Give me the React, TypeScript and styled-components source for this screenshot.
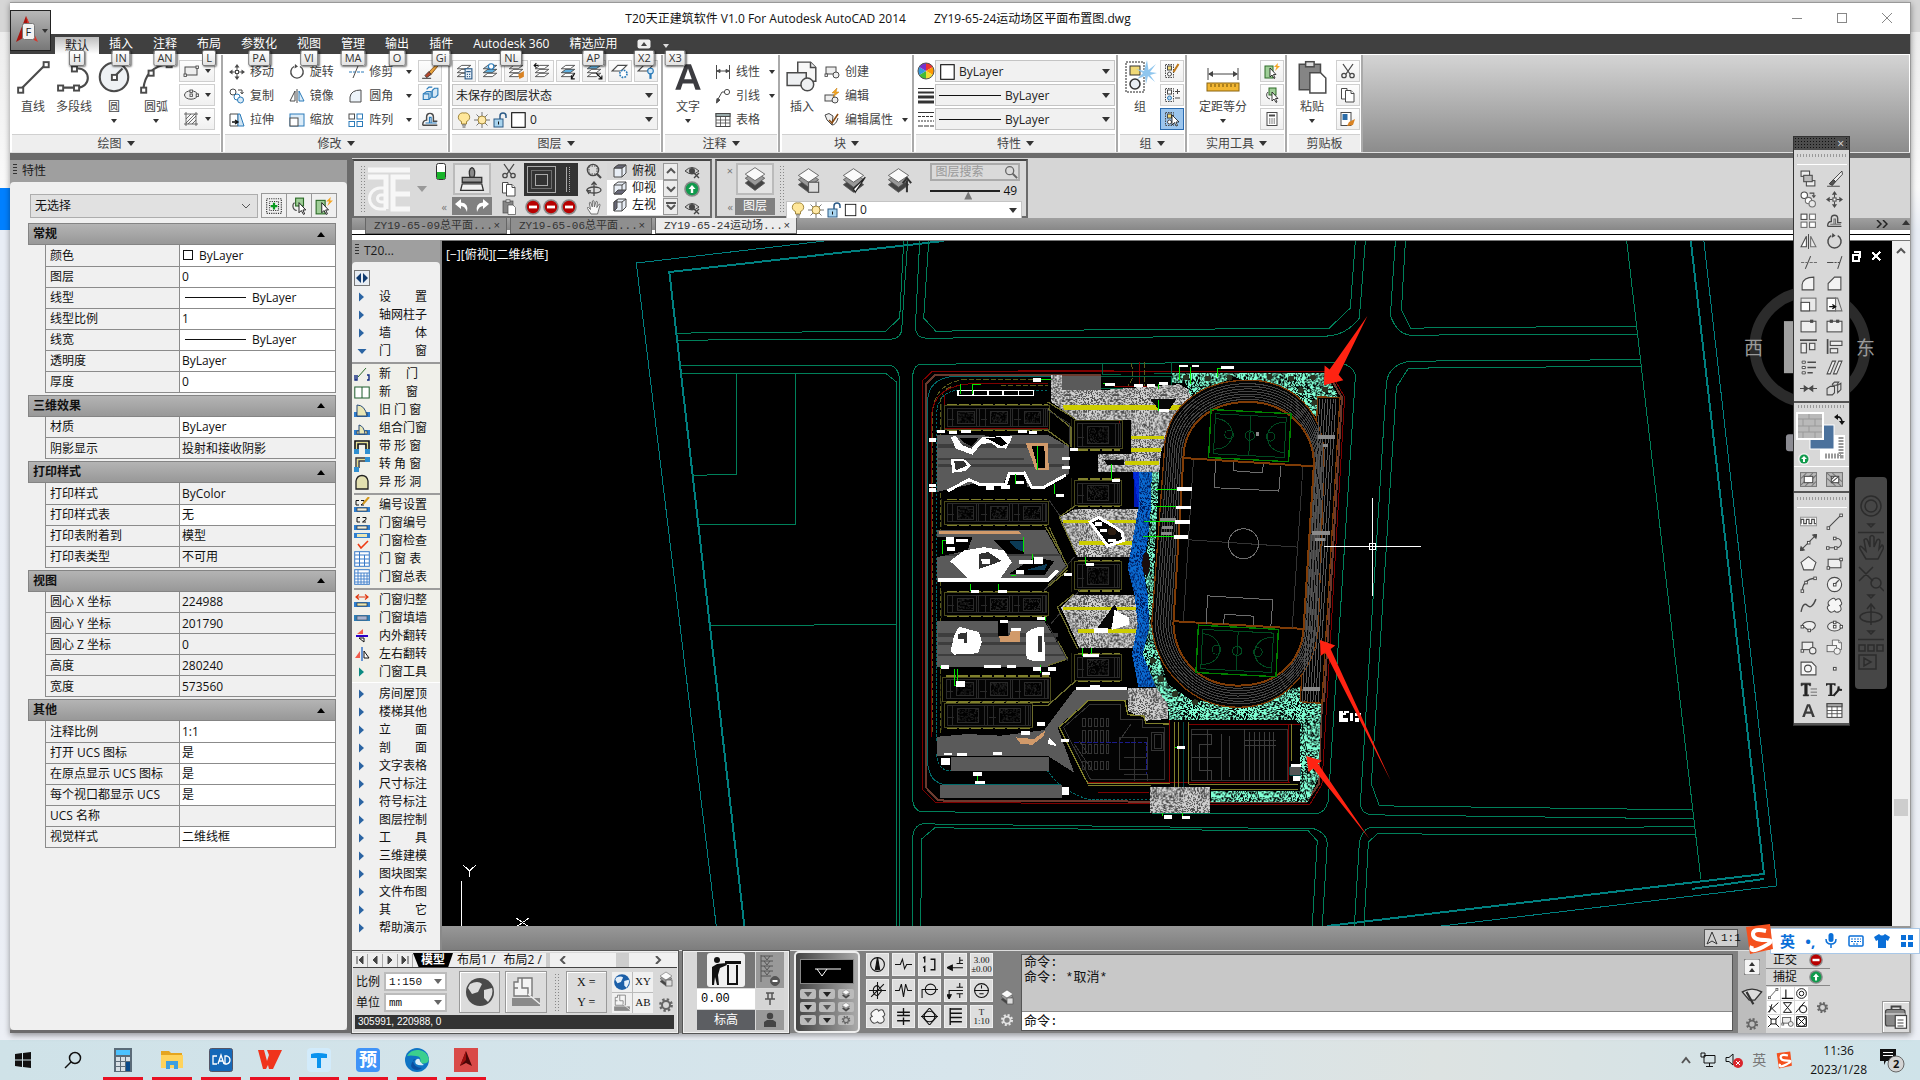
import React from "react";
import styled, { createGlobalStyle, css } from "styled-components";

const UI = `"Open Sans", "Noto Sans CJK SC", sans-serif`;
const MONO = `"Liberation Mono", "Noto Sans CJK SC", monospace`;

const Global = createGlobalStyle`
  * { box-sizing: border-box; }
  body { margin: 0; background: #e9edf3; font-family: ${UI}; font-size: 12px; line-height: 16px; color: #111; overflow: hidden; }
  button, input, select { font: inherit; color: inherit; margin: 0; padding: 0; border: 0; background: none; border-radius: 0; }
  svg { display: block; flex: none; }
`;

/* ---------- icons (16 x 16 grid) ---------- */
const K = "#4a4a4a";
const B = "#2b7bb9";
const sq = (x: number, y: number) => <rect key={`${x}-${y}`} x={x - 1} y={y - 1} width="2.4" height="2.4" fill="#fff" stroke={K} strokeWidth="0.9" />;
const layers = (a: string, b: string, c: string) => (
  <g stroke={K} strokeWidth="0.8">
    <path d="M2 13 6 10H14L10 13Z" fill={c} /><path d="M2 9.500 6 6.500H14L10 9.500Z" fill={b} /><path d="M2 6 6 3H14L10 6Z" fill={a} />
  </g>
);
const stack = (
  <g stroke="#555" strokeWidth="0.5"><path d="M8 6 14 10.500 8 15 2 10.500Z" fill="#444" /><path d="M8 3.500 14 7.500 8 12 2 7.500Z" fill="#999" /><path d="M8 1 14 5 8 9 2 5Z" fill="#fafafa" /></g>
);
const cube = (f: string, side: number) => (
  <g stroke={K} fill="#fff">
    <path d="M2 5 6 2H14V10L10 14H2Z" fill="#e8eef6" /><path d="M2 5H10V14M10 5 14 2" fill="none" />
    {side === 0 ? <path d="M2 5 6 2H14L10 5Z" fill={f} /> : side === 1 ? <path d="M2 14 6 10H14L10 14Z" fill={f} /> : <path d="M2 5 5 3V11L2 14Z" fill={f} />}
  </g>
);
const gear = (c: string) => (
  <g><circle cx="8" cy="8" r="5.6" fill="none" stroke={c} strokeWidth="2.6" strokeDasharray="2.3 2.1" /><circle cx="8" cy="8" r="4" fill="none" stroke={c} strokeWidth="2" /></g>
);
const dot = (up: boolean) => (
  <g><circle cx="8" cy="8" r="7.8" fill="#8a8a8a" /><circle cx="8" cy="8" r="6.2" fill={up ? "#109a4c" : "#b80000"} />
    {up ? <path d="M8 4 11.5 8H9.2V12H6.8V8H4.5Z" fill="#fff" /> : <rect x="4" y="6.6" width="8" height="2.8" fill="#fff" />}</g>
);
const wall = (mid: string) => <g><rect x="0" y="10" width="16" height="5" fill="#2f7fd0" /><rect x="3" y="11" width="10" height="3" fill={mid} stroke="#333" strokeWidth="0.7" /></g>;

const P: Record<string, React.ReactNode> = {
  line: <g stroke={K}><path d="M2 14 14 2" />{sq(2, 14)}{sq(14, 2)}</g>,
  pline: <g stroke={K} fill="none"><path d="M1 13H10A4.5 4.5 0 0 0 10 4H8" />{sq(1.5, 13)}{sq(9, 13)}{sq(8, 4)}</g>,
  circle: <g stroke={K} fill="#eef1f4"><circle cx="8" cy="8" r="6.7" /><path d="M8 8 12 4" />{sq(8, 8)}</g>,
  arc: <g stroke={K} fill="none"><path d="M2 14Q3 3 14 2" />{sq(2, 14)}{sq(5.5, 6)}{sq(14, 2)}</g>,
  rect: <g stroke={K} fill="#eee"><rect x="2" y="4" width="12" height="8" />{sq(2, 12)}{sq(14, 4)}</g>,
  ellipse: <g stroke={K} fill="#eee"><ellipse cx="8" cy="8" rx="6.5" ry="4.2" />{sq(8, 8)}{sq(14.2, 8)}{sq(8, 4)}</g>,
  ellarc: <g stroke={K} fill="#eee"><path d="M2 7C4 2 14 2 14.5 7 14 11 10 12 8 11.5Z" />{sq(2, 8)}{sq(8.5, 11.5)}</g>,
  hatch: <g stroke={K} strokeWidth="0.8" fill="none"><path d="M3 1V15M13 1V15M1 3H15M1 13H15M3 8 8 3M3 12 12 3M5 13 13 5M9 13 13 9" /></g>,
  move: <g fill={K}><path d="M8 0 10.5 3.5H5.5ZM8 16 5.5 12.5H10.5ZM0 8 3.5 5.5V10.5ZM16 8 12.5 10.5V5.5Z" /><rect x="6.5" y="6.5" width="3" height="3" fill="#fff" stroke={K} /><path d="M7.5 3h1v3h-1zM7.5 10h1v3h-1zM3 7.5h3v1H3zM10 7.5h3v1h-3z" /></g>,
  rotate: <g fill="none" stroke={K} strokeWidth="1.4"><path d="M5 2.5A6.2 6.2 0 1 0 11 2.5" /><path d="M6 0 9 2.5 5.5 4.5Z" fill={K} stroke="none" /></g>,
  trim: <g stroke={B} fill="none"><path d="M1 8H7M9 8H16" strokeDasharray="3 1" /><path d="M5 14 10 2" stroke={K} /></g>,
  extend: <g stroke={K} fill="none"><path d="M1 8H7" /><path d="M8 8H13" strokeDasharray="2 1" /><path d="M11 14 15 2" /></g>,
  copy: <g stroke={K} fill="#fff"><circle cx="4" cy="4" r="3" /><circle cx="8" cy="9" r="3" stroke={B} /><circle cx="11.5" cy="12" r="3" stroke={B} fill="#dcecf8" /><path d="M9 2H13V5M11.5 4 13 6 14.5 4" fill="none" /></g>,
  mirror: <g><path d="M6 3V13H1Z" fill="#fff" stroke={K} /><path d="M10 3V13H15Z" fill="#dcecf8" stroke={B} /><path d="M8 1V15" stroke={K} /></g>,
  fillet: <path d="M2 14V9Q3 2 13 2V14Z" fill="#edf4fa" stroke={K} />,
  chamfer: <path d="M2 14V8L8 2H14V14Z" fill="#f2f2f2" stroke={K} />,
  stretch: <g><path d="M1 2H9V14H1Z" fill="#fff" stroke={K} /><path d="M9 2H11L15 14H9Z" fill="#cfe3f2" stroke={B} /><path d="M3 10H8M6 8 9 10 6 12" stroke="#111" fill="none" strokeWidth="1.3" /></g>,
  scale: <g fill="#fff"><rect x="1" y="2" width="14" height="12" fill="#dcecf8" stroke={B} /><rect x="1" y="6" width="8" height="8" stroke={K} /></g>,
  array: <g fill="#fff" stroke={B}><rect x="1" y="2" width="5.5" height="5" stroke={K} /><rect x="9" y="2" width="5.5" height="5" /><rect x="1" y="9.5" width="5.5" height="5" /><rect x="9" y="9.5" width="5.5" height="5" /></g>,
  erase: <g><path d="M14.5 1 7 9 9 11 15.5 3Z" fill="#e8a33d" stroke="#7a4510" strokeWidth="0.7" /><path d="M7 8.5 3.5 12 5 14 9 11Z" fill="#b5462b" stroke="#333" strokeWidth="0.7" /><path d="M1 14.5H9" stroke={K} /></g>,
  explode: <g fill="#d5e8f6" stroke={B}><path d="M2 7 5 5H9V10L7 12H2Z" /><path d="M10 4 12 2H15V8L13 10H10Z" /><path d="M2 7H7V12" /><path d="M5 3 7 1H10" /></g>,
  offset: <g fill="none" stroke={K}><path d="M1.5 13.5H14.5M14.5 10H11V6A3 3 0 0 0 5 6V9Q1.5 9 1.5 13.5" strokeWidth="1.3" /><path d="M4 11.5H14M7.5 11V6.5H9V11" stroke={B} /></g>,
  lay0: <g>{layers("#fff", "#fff", "#fff")}<rect x="9" y="6" width="6" height="9" fill="#eaf3fb" stroke="#2b5a86" /><path d="M10 8.5H14M10.5 11H11.5M12.5 11H13.5M10.5 13H11.5M12.5 13H13.5" stroke="#2b5a86" /></g>,
  lay1: <g>{layers("#9fd0f0", "#5fb0e0", "#fff")}<circle cx="9" cy="4" r="2.4" fill="#fff" stroke={B} /></g>,
  lay2: <g>{layers("#fff", "#fff", "#fff")}<path d="M15 8 10 11 11 15 15 13Z" fill="#d98324" /></g>,
  lay3: <g>{layers("#fff", "#fff", "#fff")}<path d="M1 3H5M3 1 1 3 3 5" stroke="#111" fill="none" /></g>,
  lay4: <g>{layers("#fff", "#5fb0e0", "#fff")}<path d="M14 10 11 15M11 12V15H14" stroke="#111" fill="none" /></g>,
  lay5: <g>{layers("#5fb0e0", "#fff", "#fff")}<path d="M10 10 15 15M12 15H15V12" stroke="#111" fill="none" /></g>,
  lay6: <g><path d="M1 8 6 3H14L9 8Z" fill="#fff" stroke={K} /><circle cx="11" cy="10.500" r="3.200" fill="#fff" stroke={B} strokeWidth="1.500" strokeDasharray="1.500 1" /></g>,
  lay7: <g><path d="M1 8 6 3H14L9 8Z" fill="#fff" stroke={K} /><circle cx="12" cy="8" r="2.500" fill="#d5e8f6" stroke={B} /><rect x="11" y="10.500" width="2" height="4.500" fill={B} /></g>,
  bulb: <g><path d="M8 1A4.4 4.4 0 0 0 5.5 9.5V12H10.5V9.5A4.4 4.4 0 0 0 8 1Z" fill="#ffe79a" stroke="#8a6d1c" strokeWidth="0.8" /><path d="M6 13H10M6.5 15H9.5" stroke="#555" /></g>,
  sun: <g><path d="M8 0V16M0 8H16M2.5 2.5 13.5 13.5M13.5 2.5 2.5 13.5" stroke="#555" strokeWidth="0.8" /><circle cx="8" cy="8" r="4" fill="#ffe9a8" stroke="#8a6d1c" strokeWidth="0.8" /></g>,
  lock: <g><path d="M8 7V4A3 3 0 0 1 14 4V6" fill="none" stroke="#2b5a86" strokeWidth="1.5" /><rect x="2" y="7" width="9" height="8" fill="#a9d4ee" stroke="#2b5a86" /><path d="M6.5 9.5V12.5" stroke="#111" /></g>,
  swatch: <rect x="1.5" y="1.5" width="12" height="13" fill="#fff" stroke="#111" />,
  dim: <g stroke={K}><path d="M1.5 1V15M14.5 1V15M2 7H14" /><path d="M2 7 5 5.5V8.5ZM14 7 11 5.5V8.5Z" fill={K} /></g>,
  leader: <g stroke={K} fill="none"><circle cx="12" cy="4" r="2.6" /><path d="M9.5 4H7L2 13" /><path d="M1.5 15 2 10.5 5 12Z" fill={K} /></g>,
  table: <g stroke={K} fill="#fff"><rect x="1" y="1.5" width="14" height="13" /><rect x="1" y="1.5" width="14" height="3" fill="#9aa" /><path d="M1 8H15M1 11H15M5.5 4V14.5M10.5 4V14.5" strokeWidth="0.8" /></g>,
  block: <g stroke={K} strokeWidth="0.7" fill="#eef0f2"><path d="M6 1H12L14.500 3.500V10H6Z" fill="#f7f7f7" /><path d="M12 1V3.500H14.500" /><rect x="1" y="6" width="9" height="6" /><circle cx="10.500" cy="11.500" r="3" /></g>,
  blockNew: <g stroke={K} fill="#eee"><rect x="2" y="3" width="10" height="7" /><circle cx="12" cy="11" r="3" />{sq(2, 11)}</g>,
  blockEdit: <g stroke={K} fill="#eee"><rect x="1" y="7" width="9" height="6" /><circle cx="11" cy="12" r="3" /><path d="M13 0 8 5H11L9 9 15 4H12Z" fill="#f5a623" stroke="#c17a0b" strokeWidth="0.5" /></g>,
  attr: <g stroke={K} fill="#eee"><path d="M1 3 5 1.500 9 4 8 13 3 8Z" /><path d="M5 8 8 11 14 2" strokeWidth="1.6" fill="none" stroke="#8a4b12" /><path d="M8 13Q12 13 14 6" fill="none" /></g>,
  grpEdit: <g><rect x="1.5" y="1.5" width="8" height="13" fill="none" stroke={K} strokeDasharray="1.5 1" /><rect x="3.500" y="3" width="4" height="4" fill="#f3dc7a" stroke={K} /><circle cx="5.500" cy="11" r="2" fill="#fff" stroke={K} /><path d="M14.500 1 9.500 9" stroke="#c07a1a" strokeWidth="2" /></g>,
  grpPm: <g><rect x="1.5" y="1.5" width="8" height="13" fill="none" stroke={K} strokeDasharray="1.5 1" /><rect x="3.500" y="3" width="4" height="4" fill="#fff" stroke={K} /><circle cx="5.500" cy="11" r="2" fill="#bcd8ef" stroke={B} /><path d="M11 4.500H16M13.500 2V7M11 11H16" stroke={K} /></g>,
  grpSel: <g><rect x="1.5" y="1.5" width="8" height="13" fill="none" stroke={K} strokeDasharray="1.5 1" /><rect x="3.500" y="3" width="4" height="4" fill="#f3dc7a" stroke={K} /><circle cx="5.500" cy="11" r="2" fill="#fff" stroke={K} /><path d="M8 4V14L10.500 11.500 12 15 13.500 14.500 12 11H15Z" fill="#fff" stroke="#111" strokeWidth="0.8" /></g>,
  scissors: <g fill="none" stroke={K} strokeWidth="1.3"><path d="M3 1 10 11M13 1 6 11" /><circle cx="4" cy="12.5" r="2.2" /><circle cx="12" cy="12.5" r="2.2" /></g>,
  copydoc: <g fill="#fff" stroke={K}><path d="M1.5 1.5H7V12H1.5Z" /><path d="M5.5 3.5H11L14 6.5V15H5.5Z" /><path d="M11 3.5V6.5H14" /></g>,
  paste: <g stroke={K} strokeWidth="0.7"><rect x="2" y="2" width="10" height="12" fill="#858585" /><rect x="5" y="0.8" width="4" height="2.4" fill="#ddd" /><path d="M7 6H12L14.5 8.5V15.5H7Z" fill="#fff" /></g>,
  matchp: <g><rect x="1" y="1.5" width="10" height="13" fill="#fff" stroke={K} /><rect x="2.5" y="3" width="5" height="6" fill="#2b6ca8" /><path d="M15 8 9 11 7 15 13 14Z" fill="#d98324" /></g>,
  calc: <g><rect x="3" y="1.5" width="10" height="13" fill="#fff" stroke={K} /><rect x="5" y="3.5" width="6" height="2" fill={K} /><path d="M5 8H11M5 10H11M5 12H11" stroke={K} strokeDasharray="1.4 0.9" /></g>,
  globe: <g><circle cx="8" cy="8" r="7" fill="#4a4a4a" /><path d="M3 4Q7 2 9 4L7 8 4 9 2 6ZM10 7 14 6Q15 9 12 13L10 11Z" fill="#dcdcdc" /></g>,
  globeBlue: <g><circle cx="8" cy="8" r="7" fill="#1c5fa8" /><path d="M3 4Q7 2 9 4L7 8 4 9 2 6ZM10 7 14 6Q15 9 12 13L10 11Z" fill="#e6f0fa" /></g>,
  plan: <g stroke="#777" strokeWidth="0.7" fill="#f4f4f4"><path d="M1 11H15V15H1Z" fill="#8a8a8a" stroke="none" /><path d="M2 3H4V1H11V10H2Z" /><path d="M6 1V6H9V10M2 6H4" fill="none" /><path d="M9 9 15 14" stroke="#eee" /></g>,
  gear: gear("#666"), gearLight: gear("#e4e4e4"),
  stack, stackBox: <g>{stack}<rect x="8" y="9" width="6" height="6" fill="#ddd" stroke="#555" strokeWidth="0.7" /></g>,
  stackPen: <g>{stack}<path d="M15 6 9 15 8 13Z" fill="#fff" stroke="#222" strokeWidth="0.7" /></g>,
  stackUp: <g>{stack}<path d="M13 15V8M10.5 9.5 13 6.5 15.5 9.5" stroke="#333" fill="none" strokeWidth="1.2" /></g>,
  red: dot(false), green: dot(true),
  zoomwin: <g fill="none" stroke={K}><rect x="3" y="3" width="8" height="8" strokeDasharray="1.5 1" /><circle cx="7" cy="7" r="5.6" strokeWidth="1.4" /><path d="M11 11 15 15" strokeWidth="2.2" /></g>,
  orbit: <g fill="none" stroke={K} strokeWidth="1.3"><ellipse cx="8" cy="9" rx="7" ry="3" /><path d="M8 15V2M5.5 4 8 1 10.5 4M3 13 1 9.5 5 10" /></g>,
  hand: <path d="M5 15 1.5 9.5Q1 8 2.5 8.5L4.5 10.5 3.3 4Q3.5 2.8 4.7 3.6L6.3 8 6.4 2Q7.2.8 8 2L8.4 8 10 2.6Q11 1.8 11.4 3L10.8 8.5 13 5.2Q14.2 4.8 14 6.2L11.5 15Z" fill="#f8f8f8" stroke="#666" strokeWidth="0.9" />,
  cubeTop: cube("#667", 0), cubeBot: cube("#667", 1), cubeLeft: cube("#667", 2),
  eye: <g><path d="M1 8Q8 1 15 8 8 14 1 8Z" fill="#ccc" stroke="#444" /><circle cx="8" cy="8" r="3" fill="#444" /><path d="M10 10 15 15M15 10 10 15" stroke="#444" strokeWidth="1.4" /></g>,
  undo: <path d="M1 6 7 1V4.5Q15 5 13 14 11 8 7 8V11Z" fill="#fff" />,
  redo: <path d="M15 6 9 1V4.5Q1 5 3 14 5 8 9 8V11Z" fill="#fff" />,
  bigbrush: <g stroke="#333" strokeWidth="0.8"><path d="M6.8 7Q5.5 2 8 1 10.5 2 9.2 7Z" fill="#8a8a8a" /><path d="M2 7H14V10H2Z" fill="#9a9a9a" /><path d="M2 11H14L15 15H1Z" fill="#f1f1f1" /></g>,
  search: <g fill="none" stroke="#666"><circle cx="6.5" cy="6.5" r="4.6" strokeWidth="1.5" /><path d="M10 10 15 15" strokeWidth="2.2" /></g>,
  selplus: <g><rect x="1.5" y="1.5" width="13" height="13" fill="none" stroke="#333" strokeDasharray="1 1" /><rect x="4" y="4" width="8" height="8" fill="none" stroke="#333" strokeDasharray="1 1" /><path d="M8 5V11M5 8H11" stroke="#089b1f" strokeWidth="2" /></g>,
  selpick: <g><rect x="5" y="1" width="7" height="7" fill="#9fce97" stroke="#2c6b27" /><path d="M4 5A4 4 0 0 0 6 12" fill="none" stroke={K} /><path d="M8 5V14L10 12 12 15.5 13 15 11.5 11.5H14Z" fill="#fff" stroke="#111" strokeWidth="0.8" /></g>,
  selquick: <g><rect x="1" y="3" width="8" height="12" fill="#9fce97" stroke="#2c6b27" /><path d="M6 5V14L8 12 10 15.5 11 15 9.5 11.5H12Z" fill="#fff" stroke="#111" strokeWidth="0.8" /><path d="M14 0 10 4H12.5L11 8 16 3H13.5Z" fill="#f5a623" /></g>,
  door: <g><path d="M1 9V14H3V9M13 9H15V14H13" fill="none" stroke="#112a80" strokeWidth="1.4" /><path d="M4 11 12 2" stroke="#2a6b2a" /></g>,
  win: <g fill="#fff" stroke="#1d5c2c"><rect x="0.8" y="3" width="14.4" height="11" /><path d="M8 3V14" /></g>,
  olddoor: <g>{wall("#e9e6b4")}<path d="M3 14V3Q11 3 13 14Z" fill="#e9e6b4" stroke="#2a4d7c" /></g>,
  combo: <g>{wall("#e9e6b4")}<path d="M5 14V5Q10 6 11 14Z" fill="#e9e6b4" stroke="#2a4d7c" /></g>,
  band: <g fill="none"><path d="M1 12V3H15V12M4 12V6H12V12" stroke="#111" strokeWidth="1.6" /><path d="M2.5 12V4.5H13.5V12" stroke="#e3dc8a" /><rect x="0" y="11" width="5" height="5" fill="#2f8fd0" /><rect x="11" y="11" width="5" height="5" fill="#2f8fd0" /></g>,
  corner: <g fill="none"><path d="M2 14V2H12M5 12V5H12" stroke="#333" strokeWidth="1.4" /><path d="M3.5 13V3.5H12" stroke="#e3dc8a" /><rect x="0" y="11" width="5" height="5" fill="#2f8fd0" /><rect x="11" y="1" width="5" height="5" fill="#2f8fd0" /></g>,
  hole: <path d="M2 15V7Q3 1.5 8 1.5T14 7V15Z" fill="#e3e0b0" stroke="#222" strokeWidth="1.3" />,
  num: <g>{wall("#eed")}<path d="M6 2.5H3V7H6M8.5 2.5H12V4.5L8.5 7H12" stroke="#111" fill="none" /></g>,
  numEdit: <g>{wall("#eed")}<path d="M5 3.5H2V8H5M7 3.5H10V5.5L7 8H10" stroke="#111" fill="none" /><path d="M15 0 9 7" stroke="#d59a1c" strokeWidth="2" /></g>,
  check: <g><rect x="0" y="0" width="16" height="5" fill="#2f7fd0" /><rect x="3" y="1" width="10" height="3" fill="#e9e6b4" /><path d="M4 11 7 15 14 8" stroke="#ef3b12" fill="none" strokeWidth="1.6" /></g>,
  tbl: <g fill="#fff" stroke="#3a7bc8"><rect x="0.7" y="0.7" width="14.6" height="14.6" /><path d="M1 4H15M1 8H15M1 12H15M5.5 1V15M10.5 4V15" /></g>,
  tbl2: <g fill="#fff" stroke="#3a7bc8"><rect x="0.7" y="0.7" width="14.6" height="14.6" /><path d="M1 4H15M1 7H15M1 10H15M1 13H15M4 1V15M7 4V15M10 4V15M13 4V15" strokeWidth="0.9" /></g>,
  adj: <g>{wall("#e9e6b4")}<path d="M2 5H14M5 2.5 2 5 5 7.5M11 2.5 14 5 11 7.5" stroke="#e0370f" fill="none" strokeWidth="1.2" /></g>,
  fillw: <g><rect x="0" y="5" width="16" height="6" fill="#2f7fb8" /><rect x="3" y="6" width="10" height="4" fill="#a7b3cf" stroke="#456" strokeWidth="0.7" /></g>,
  flipV: <g><path d="M3 6H9V1Z" fill="#f35b4a" /><path d="M2 8H14" stroke="#2a00c8" strokeWidth="2" /><path d="M5 10H10V14Z" fill="#fff" stroke="#111" /></g>,
  flipH: <g><path d="M1 12H6V5Z" fill="#f35b4a" /><path d="M8 1V15" stroke="#2a6bc8" strokeWidth="1.4" /><path d="M10 5V12H15Z" fill="#fff" stroke="#111" /></g>,
  tri: <path d="M5 3.5 10 8 5 12.5Z" fill="#2b64a3" />,
  triG: <path d="M5 3.5 10 8 5 12.5Z" fill="#0b8a82" />,
  triD: <path d="M3.5 6H12.5L8 11Z" fill="#2b64a3" />,
  expand: <g><rect x="0.5" y="0.5" width="15" height="15" fill="#e8edf3" stroke="#777" /><path d="M7 3V13L2 8ZM9 3V13L14 8Z" fill="#0f3a70" /></g>,
  copies: <g fill="#eee" stroke={K}><rect x="1" y="1" width="8" height="5" /><rect x="6" y="10" width="8" height="5" /><rect x="3.5" y="5" width="8" height="6" fill="#bbb" /></g>,
  eraseG: <g stroke="#333" strokeWidth="0.8"><path d="M15 1 7 9 9 11 15.5 4Z" fill="#eee" /><path d="M7 9 3 13 6 14.5 9 11Z" fill="#555" /><path d="M1 15.3H13" /></g>,
  brk: <g fill="#eee" stroke={K}><rect x="1" y="4" width="14" height="10" /><rect x="10" y="3" width="2" height="2" fill={K} /></g>,
  brk2: <g fill="#eee" stroke={K}><rect x="1" y="4" width="14" height="10" /><rect x="4" y="3" width="2" height="2" fill={K} /><rect x="10" y="3" width="2" height="2" fill={K} /></g>,
  alignT: <g fill="#eee" stroke={K}><path d="M0 2H16" strokeWidth="1.6" /><rect x="1" y="5" width="5" height="9" /><rect x="9" y="5" width="5" height="6" /></g>,
  alignL: <g fill="#eee" stroke={K}><path d="M1.5 1V15" strokeWidth="1.6" /><rect x="4" y="3" width="11" height="4" /><rect x="4" y="10" width="7" height="4" /></g>,
  list: <g stroke={K} strokeWidth="1.3"><path d="M7 3H15M7 8H15M7 13H12" /><path d="M2 2H5V4H2ZM2 7H5V9H2ZM2 12H5V14H2Z" fill="#fff" strokeWidth="0.9" /></g>,
  slashes: <path d="M6 2H9L4 14H1ZM12 2H15L10 14H7Z" fill="#eee" stroke={K} />,
  join: <g stroke={K} fill={K}><path d="M0 8H16" /><path d="M4 5.5 7.5 8 4 10.5ZM12 5.5 8.5 8 12 10.5Z" /></g>,
  boxes: <g fill="#ddd" stroke={K}><path d="M1 8 4 6H8V12L6 14H1Z" /><path d="M6 4 8 2H12L10 5H6ZM11 5 14 3V9L11 12Z" /></g>,
  battlement: <g fill="#fff" stroke={K}><rect x="0.5" y="4" width="15" height="8" stroke="#999" /><path d="M1 10V6H3.5V10H6V6H8.5V10H11V6H13.5V10H15" fill="none" strokeWidth="1.1" /></g>,
  xline: <g stroke={K} fill={K}><path d="M2 14 14 2" /><path d="M0 16 1 12 4 15ZM16 0 12 1 15 4Z" />{sq(8, 8)}</g>,
  polygon: <path d="M8 1.5 15 7 12.5 14H3.5L1 7Z" fill="#f4f4f4" stroke={K} />,
  spline: <path d="M1 14Q3 4 7 8T15 2" fill="none" stroke={K} strokeWidth="1.3" />,
  cloud: <path d="M5 2Q8 0 9 3 13 0 14 4 16 7 13 8 16 12 12 14 9 15 8 13 4 16 2 12 0 9 3 8 0 5 5 2Z" fill="#f6f6f6" stroke={K} />,
  region: <g fill="#f6f6f6" stroke={K}><path d="M1 2H11L15 6V14H1Z" /><circle cx="7.5" cy="8" r="3.2" /></g>,
  point: <rect x="7" y="7" width="2.500" height="2.500" fill="#fff" stroke={K} />,
  mtext: <path d="M1 2H10V4.5H9L8.5 3.5H6.8V13H8.2V14H3V13H4.4V3.5H2.5L2 4.5H1ZM10 7.5H16M10 10.5H16M10 13.5H16" fill="#222" stroke="#333" strokeWidth="0.6" />,
  ttool: <g><path d="M0 2H9V4.5H8L7.5 3.5H5.8V13H7.2V14H2V13H3.4V3.5H1.5L1 4.5H0Z" fill="#222" /><path d="M7 14 13 7M12 5 11.5 8 15 8.5" fill="none" stroke="#222" strokeWidth="2" /></g>,
  letterA: <path d="M6.6 2H9.4L14 14H11.5L10.5 11H5.5L4.5 14H2ZM6.2 9H9.8L8 4Z" fill="#3c3c40" fillRule="evenodd" />,
  hatch1: <g><rect x="0.5" y="1.5" width="15" height="13" fill="#bbb" stroke="#777" /><path d="M1 7 6 2M1 13 12 2M5 14 15 4M11 14 15 10" stroke="#777" /><rect x="4" y="5" width="8" height="6" fill="#fff" stroke={K} /></g>,
  hatch2: <g><rect x="0.5" y="1.5" width="15" height="13" fill="#bbb" stroke="#777" /><path d="M1 2 14 14M6 2 15 10M1 7 9 14" stroke="#777" /><rect x="5" y="5" width="7" height="6" fill="#fff" stroke={K} /><path d="M5 11 12 5M5 8 8 5" stroke={K} /></g>,
  s0: <g fill="none" stroke="#111"><circle cx="8" cy="8" r="6.5" /><path d="M8 1 10 13H6Z" fill="#111" /></g>,
  s1: <path d="M0 8H5L7 3 9 12 11 8H16" fill="none" stroke="#111" />,
  s2: <path d="M2 2 3.5 1V6M9 3H13V13H9M2 11 3.5 10V15" fill="none" stroke="#111" strokeWidth="1.3" />,
  s3: <g fill="none" stroke="#111"><path d="M3 11H15M9 7H15M12 7V1M12 4H15" /><path d="M0 11 5 8.5V13.5Z" fill="#111" /></g>,
  s5: <g fill="none" stroke="#111"><path d="M8 0V16M0 8H16M2 14 14 2M4 8Q4 4 8 3L12 8 8 13Q4 12 4 8" /></g>,
  s6: <path d="M0 8H4L6 2 8 14 10 2 12 8H16" fill="none" stroke="#111" />,
  s7: <g fill="none" stroke="#111"><circle cx="9" cy="7" r="5" /><path d="M1 15V7H16" /></g>,
  s8: <g fill="none" stroke="#111"><path d="M2 15V8H15M9 5H15M12 5V1M9 11H15M12 11V15" /><path d="M2 16 0 12H4Z" fill="#111" /></g>,
  s9: <g fill="none" stroke="#111"><circle cx="8" cy="8" r="6.5" /><path d="M1 8H15M8 3V6M6 11H10" /></g>,
  s11: <path d="M8 0V7M8 9V16M2 4H14M2 7H14M2 12H14" fill="none" stroke="#111" strokeWidth="1.3" />,
  s12: <g fill="none" stroke="#111"><circle cx="8" cy="8" r="5" /><path d="M8 0 15 8 8 16 1 8ZM0 8H16" /></g>,
  s13: <path d="M3 0V16M3 1H14M3 5H14M3 9H14M3 13H14" fill="none" stroke="#111" strokeWidth="1.3" />,
  n1: <path d="M1 14H15M6 14V3" fill="none" stroke="#111" strokeWidth="1.4" />,
  n2: <g fill="none" stroke="#111" strokeWidth="1.2"><circle cx="8" cy="8" r="6" /><circle cx="8" cy="8" r="2.800" /></g>,
  n3: <path d="M1 14 14 2M3 6 11 14M3 14 6 4" fill="none" stroke="#111" strokeWidth="1.2" />,
  n4: <path d="M3 2H13L3 14H13Z" fill="none" stroke="#111" strokeWidth="1.2" />,
  n5: <g fill="none" stroke="#111" strokeWidth="1.2"><circle cx="10" cy="10" r="4.500" /><path d="M1 14 12 1" /></g>,
  n6: <g fill="none" stroke="#111" strokeWidth="1.2"><path d="M1 1 15 15M15 1 1 15" /><rect x="5" y="5" width="6" height="6" fill="#fff" /></g>,
  n7: <g fill="none" stroke="#111" strokeWidth="1.2"><circle cx="8" cy="8" r="6" /><path d="M2 2H14V14H2ZM4 4 12 12M12 4 4 12" /></g>,
  wiper: <g stroke="#333" fill="#ddd"><path d="M1 5Q8 1 15 5L10 11H6Z" /><path d="M4 5 9 14" strokeWidth="1.6" /></g>,
  bag: <g stroke="#444" strokeWidth="0.8" fill="#888"><path d="M5 3V1H11V3" fill="none" strokeWidth="1.2" /><rect x="1" y="3" width="13" height="11" rx="1.5" /><path d="M1 6H14" stroke="#ddd" /><rect x="7.500" y="7" width="7.500" height="8.500" fill="#fff" /><path d="M9 10H13M9 12H13M9 14H13" /></g>,
};
P.sq1 = <g stroke={K}><path d="M3 13 11 4" />{sq(3, 13)}{sq(12, 3)}</g>;

const Svg = styled.svg.attrs({ viewBox: "0 0 16 16", "aria-hidden": true })<{ $s: number }>`
  width: ${(p) => p.$s}px; height: ${(p) => p.$s}px;
`;
const Ic = ({ n, s = 16 }: { n: string; s?: number }) => <Svg $s={s}>{P[n]}</Svg>;
const Caret = styled.span<{ $up?: boolean; $c?: string; $w?: number }>`
  display: inline-block; flex: none; width: 0; height: 0; border: ${(p) => p.$w ?? 3}px solid transparent;
  ${(p) => (p.$up ? css`border-top: 0; border-bottom: 5px solid ${p.$c ?? "#333"};` : css`border-bottom: 0; border-top: ${(p.$w ?? 3) + 1}px solid ${p.$c ?? "#333"};`)}
`;

/* ---------- window frame ---------- */
const Desktop = styled.div`
  position: relative; display: flex; flex-direction: column; min-height: 100vh; overflow: hidden;
  background: linear-gradient(#d6d6d6 32px, #ededed 32px, #fafafa 188px, #e8edf5 230px, #eceff5);
`;
const Accent = styled.div`position: absolute; left: 0; top: 188px; width: 10px; height: 42px; background: #0080ff;`;
const Frame = styled.div`
  position: relative; flex: 1; display: flex; flex-direction: column; margin: 2px 9px 7px 10px;
  border-top: 1px solid #999; border-right: 1px solid #999; background: #6b6b6b; box-shadow: 0 2px 6px #0006;
`;
const TitleBar = styled.header`display: flex; align-items: center; height: 31px; background: #fff; padding-right: 16px;`;
const Title = styled.h1`flex: 1; margin: 0; padding-right: 160px; padding-left: 12px; text-align: center; font-size: 12px; font-weight: 400; white-space: pre;`;
const Caption = styled.div`position: absolute; right: 13px; top: 7px; display: flex; gap: 29px; button { width: 16px; height: 16px; }`;
const AppButton = styled.button`
  position: absolute; z-index: 3; left: 0; top: 7px; width: 41px; height: 41px; display: flex; align-items: center; justify-content: center; gap: 2px;
  border: 1px solid #222; background: linear-gradient(#b7b7b7, #787878);
`;
const TabRow = styled.nav`display: flex; height: 20px; padding-left: 45px; background: #404040;`;
const Tab = styled.button<{ $on?: boolean; $tight?: boolean }>`
  position: relative; padding: 0 10px; color: #fff; line-height: 20px; white-space: nowrap;
  ${(p) => p.$on && css`color: #222; background: linear-gradient(#bdbdbd, #fff); margin-top: 3px; line-height: 17px;`}
  ${(p) => p.$tight && css`padding: 0 6px 0 2px;`}
`;
const Tip = styled.kbd<{ $end?: boolean }>`
  position: absolute; z-index: 2; left: ${(p) => (p.$end ? "100%" : "50%")}; bottom: -12px; transform: translateX(-50%); padding: 0 3px; min-width: 14px; text-align: center;
  font: 11px/14px ${UI}; color: #333; background: linear-gradient(#fff, #e2e2e2); border: 1px solid #777; border-radius: 2px; box-shadow: 1px 1px 2px #0008;
`;

/* ---------- ribbon ---------- */
const Ribbon = styled.section`display: flex; height: 99px; padding-top: 1px; background: #fff; margin-bottom: 5px; border-bottom: 1px solid #e0e0e0;`;
const Panel = styled.div<{ $w: number }>`display: flex; flex-direction: column; width: ${(p) => p.$w}px; border-right: 2px solid #aaa; background: #fff;`;
const PanelBody = styled.div<{ $l: number; $r: number }>`display: flex; flex: 1; align-items: flex-start; justify-content: space-between; padding: 5px ${(p) => p.$r}px 0 ${(p) => p.$l}px;`;
const PanelFoot = styled.button`
  display: flex; align-items: center; justify-content: center; gap: 5px; height: 18px; margin-left: 2px; margin-right: 1px;
  background: #eee; border-top: 1px solid #d0d0d0; color: #444;
`;
const Filler = styled.div`flex: 1; margin-right: 1px; background: linear-gradient(#d4d4d4, #8c8c8c);`;
const Big = styled.button<{ $w: number }>`
  display: flex; flex-direction: column; align-items: center; width: ${(p) => p.$w}px; height: 70px; color: #444; white-space: nowrap;
  > svg { margin-bottom: 5px; } > span + span { margin-top: 4px; }
`;
const Col = styled.div`display: flex; flex-direction: column; gap: 2px;`;
const Item = styled.button<{ $w?: number }>`
  display: flex; align-items: center; gap: 5px; width: ${(p) => (p.$w ? `${p.$w}px` : "auto")}; height: 22px; padding-top: 1px; color: #444; white-space: nowrap;
  > span:last-child:not(:nth-child(2)) { margin-left: auto; }
`;
const Btn = styled.button<{ $on?: boolean; $w?: number }>`
  display: flex; align-items: center; justify-content: space-around; width: ${(p) => p.$w ?? 24}px; height: 22px;
  border: 1px solid ${(p) => (p.$on ? "#2a6bb0" : "#cfcfcf")}; background: ${(p) => (p.$on ? "#9cc6ee" : "linear-gradient(#fdfdfd, #f0f0f0)")};
`;
const Row = styled.div<{ $g?: number; $p?: string }>`display: flex; align-items: center; gap: ${(p) => p.$g ?? 0}px; padding: ${(p) => p.$p ?? 0};`;
const Combo = styled.label<{ $w?: number; $h?: number }>`
  display: flex; align-items: center; gap: 2px; width: ${(p) => (p.$w ? `${p.$w}px` : "100%")}; height: ${(p) => p.$h ?? 22}px; padding: 1px 4px 0 3px;
  border: 1px solid #c4c4c4; background: ${(p) => (p.$h ? "#fff" : "#f1f1f1")}; color: #222;
  select { flex: 1; min-width: 0; appearance: none; outline: 0; }
`;
const Rule = styled.i`width: 62px; height: 1px; margin-right: 2px; background: #111;`;

function Pick({ label, value, w, h, pre }: { label: string; value: string; w?: number; h?: number; pre?: React.ReactNode }) {
  return <Combo $w={w} $h={h}>{pre}<select aria-label={label} defaultValue={value}><option>{value}</option></select><Caret $w={4} /></Combo>;
}
function RibbonPanel({ title, w, l = 3, r = 1, noArrow, children }: { title: string; w: number; l?: number; r?: number; noArrow?: boolean; children: React.ReactNode }) {
  return (
    <Panel $w={w}><PanelBody $l={l} $r={r}>{children}</PanelBody><PanelFoot>{title}{!noArrow && <Caret $w={4} />}</PanelFoot></Panel>
  );
}
const BigBtn = ({ n, t, w, arrow, s = 34 }: { n: string; t: string; w: number; arrow?: boolean; s?: number }) => (
  <Big $w={w}><Ic n={n} s={s} /><span>{t}</span>{arrow && <Caret />}</Big>
);
const Tool = ({ n, t, w, arrow }: { n: string; t: string; w?: number; arrow?: boolean }) => (
  <Item $w={w}><Ic n={n} /><span>{t}</span>{arrow && <Caret />}</Item>
);

const TABS: [string, string][] = [["默认", "H"], ["插入", "IN"], ["注释", "AN"], ["布局", "L"], ["参数化", "PA"], ["视图", "VI"], ["管理", "MA"], ["输出", "O"], ["插件", "Gi"], ["Autodesk 360", "NL"], ["精选应用", "AP"]];

const Wheel = () => (
  <svg width="18" height="18" viewBox="-9 -9 18 18">{["#e33", "#f90", "#ed3", "#4b3", "#39d", "#73c"].map((c, i) => (
    <path key={c} d="M0 0V-8A8 8 0 0 1 6.9-4Z" fill={c} transform={`rotate(${i * 60})`} />))}<circle r="8" fill="none" stroke="#555" /></svg>
);
const Lines = ({ dash }: { dash?: boolean }) => (
  <svg width="18" height="18" viewBox="0 0 18 18" stroke="#333"><path d="M1 2.5H17" strokeWidth="1" /><path d="M1 6.5H17" strokeWidth={dash ? 1 : 2} strokeDasharray={dash ? "3 1" : ""} /><path d="M1 11H17" strokeWidth={dash ? 1 : 3} strokeDasharray={dash ? "2 1" : ""} /><path d="M1 16H17" strokeWidth={dash ? 1 : 3} strokeDasharray={dash ? "5 1" : ""} /></svg>
);

function RibbonBar() {
  return (
    <Ribbon>
      <RibbonPanel title="绘图" w={213} r={6}>
        <BigBtn n="line" t="直线" w={40} /><BigBtn n="pline" t="多段线" w={40} /><BigBtn n="circle" t="圆" w={38} arrow /><BigBtn n="arc" t="圆弧" w={44} arrow />
        <Col>{["rect", "ellipse", "hatch"].map((n) => <Btn key={n} $w={36} aria-label={n}><Ic n={n} /><Caret /></Btn>)}</Col>
      </RibbonPanel>
      <RibbonPanel title="修改" w={227} l={6} r={6}>
        <Col><Tool n="move" t="移动" w={54} /><Tool n="copy" t="复制" w={54} /><Tool n="stretch" t="拉伸" w={54} /></Col>
        <Col><Tool n="rotate" t="旋转" w={54} /><Tool n="mirror" t="镜像" w={54} /><Tool n="scale" t="缩放" w={54} /></Col>
        <Col><Tool n="trim" t="修剪" w={64} arrow /><Tool n="fillet" t="圆角" w={64} arrow /><Tool n="array" t="阵列" w={64} arrow /></Col>
        <Col>{["erase", "explode", "offset"].map((n) => <Btn key={n} aria-label={n}><Ic n={n} s={18} /></Btn>)}</Col>
      </RibbonPanel>
      <RibbonPanel title="图层" w={213} l={2}>
        <Col>
          <Row $g={2}>{[0, 1, 2, 3, 4, 5, 6, 7].map((i) => <Btn key={i} aria-label={`图层 ${i}`}><Ic n={`lay${i}`} s={18} /></Btn>)}</Row>
          <Pick label="图层状态" value="未保存的图层状态" />
          <Pick label="当前图层" value="0" pre={<><Ic n="bulb" /><Ic n="sun" /><Ic n="lock" /><Ic n="swatch" s={18} /></>} />
        </Col>
      </RibbonPanel>
      <RibbonPanel title="注释" w={117} r={3}>
        <BigBtn n="letterA" t="文字" w={44} s={34} arrow />
        <Col><Tool n="dim" t="线性" w={60} arrow /><Tool n="leader" t="引线" w={60} arrow /><Tool n="table" t="表格" /></Col>
      </RibbonPanel>
      <RibbonPanel title="块" w={134} r={4}>
        <BigBtn n="block" t="插入" w={38} />
        <Col><Tool n="blockNew" t="创建" /><Tool n="blockEdit" t="编辑" /><Tool n="attr" t="编辑属性" w={84} arrow /></Col>
      </RibbonPanel>
      <RibbonPanel title="特性" w={204}>
        <Col>
          <Row><Wheel /><Pick w={180} label="颜色" value="ByLayer" pre={<Ic n="swatch" s={18} />} /></Row>
          <Row><Lines /><Pick w={180} label="线宽" value="ByLayer" pre={<Rule />} /></Row>
          <Row><Lines dash /><Pick w={180} label="线型" value="ByLayer" pre={<Rule />} /></Row>
        </Col>
      </RibbonPanel>
      <RibbonPanel title="组" w={69}>
        <Big $w={38}><svg width="34" height="34" viewBox="0 0 34 34"><rect x="3" y="2" width="18" height="30" fill="none" stroke="#222" strokeDasharray="2 1" /><rect x="7" y="6" width="10" height="9" fill="#f0d977" stroke="#333" /><circle cx="12" cy="24" r="5" fill="#e9eef3" stroke="#333" strokeWidth="1.5" /><path d="M24 0 25.500 10 33 4 27 12 34 13 27 15 32 22 25 16 23 24 22 16 14 19 20 13 13 9 21 11Z" fill="#8fc6ee" /></svg><span>组</span></Big>
        <Col><Btn aria-label="组编辑"><Ic n="grpEdit" /></Btn><Btn aria-label="添加或删除"><Ic n="grpPm" /></Btn><Btn $on aria-label="启用组选择"><Ic n="grpSel" /></Btn></Col>
      </RibbonPanel>
      <RibbonPanel title="实用工具" w={100}>
        <Big $w={66}><svg width="34" height="34" viewBox="0 0 34 34"><path d="M2 8V20M32 8V20M3 14H31" stroke="#444" /><path d="M2 14 7 11V17ZM32 14 27 11V17Z" fill="#444" /><rect x="1" y="23" width="32" height="8" fill="#f2b632" stroke="#8a6410" /><path d="M5 24v3M9 24v3M13 24v3M17 24v3M21 24v3M25 24v3M29 24v3" stroke="#6b4c08" /></svg><span>定距等分</span><Caret /></Big>
        <Col>{["selquick", "selpick", "calc"].map((n) => <Btn key={n} aria-label={n}><Ic n={n} /></Btn>)}</Col>
      </RibbonPanel>
      <RibbonPanel title="剪贴板" w={76} noArrow>
        <BigBtn n="paste" t="粘贴" w={44} arrow />
        <Col>{["scissors", "copydoc", "matchp"].map((n) => <Btn key={n} aria-label={n}><Ic n={n} /></Btn>)}</Col>
      </RibbonPanel>
      <Filler />
    </Ribbon>
  );
}

/* ---------- properties palette ---------- */
const Work = styled.main`flex: 1; display: flex; gap: 5px; min-height: 0;`;
const Props = styled.aside`display: flex; flex-direction: column; width: 337px; margin: 2px 0 3px; background: #9f9f9f;`;
const GripTitle = styled.div`
  display: flex; flex: none; align-items: center; height: 22px; padding-left: 12px; color: #1a1a1a; border-radius: 4px 4px 0 0;
  background: repeating-linear-gradient(#333 0 1px, transparent 1px 3px) 3px 4px / 4px 12px no-repeat, #9f9f9f;
`;
const PropsBody = styled.div`flex: 1; padding: 11px 10px 0 18px; background: #f0f0f0; border-radius: 4px;`;
const Select = styled.label`
  display: flex; align-items: center; flex: 1; height: 24px; margin-left: 2px; margin-right: 4px; padding: 1px 6px 0 4px; background: #e1e1e1; border: 1px solid #adadad;
  select { flex: 1; appearance: none; outline: 0; }
`;
const SelBtn = styled.button`display: flex; align-items: center; justify-content: center; width: 26px; height: 25px; margin-left: -1px; border: 1px solid #999; background: #f0f0f0;`;
const Sections = styled.div`padding-top: 3px;`;
const Head = styled.button`
  display: flex; align-items: center; justify-content: space-between; width: 308px; height: 22px; margin-top: 2px; padding: 0 10px 0 4px; text-align: left; font-weight: 700;
  border: 1px solid #848484; background: linear-gradient(#b4b4b4, #989898);
`;
const Table = styled.table`
  width: 291px; margin-left: 17px; border-collapse: collapse; table-layout: fixed; border-spacing: 0;
  td, th { height: 21px; padding: 0 0 0 4px; line-height: 19px; border: 1px solid #8b8b8b; border-top: 0; font-weight: 400; text-align: left; white-space: nowrap; overflow: hidden; }
  th { width: 134px; }
`;
const Val = styled.td<{ $w: boolean }>`&& { padding-left: 2px; background: ${(p) => (p.$w ? "#fff" : "#f0f0f0")}; }`;
const Cell = styled.span`display: flex; align-items: center; gap: 6px; i { width: 61px; height: 1px; margin-left: 3px; background: #111; } b { width: 10px; height: 10px; margin-left: 1px; border: 1px solid #111; }`;
type Prop = [string, string, 0 | 1, string?];
const SECTIONS: [string, Prop[]][] = [
  ["常规", [["颜色", "ByLayer", 1, "box"], ["图层", "0", 1], ["线型", "ByLayer", 1, "line"], ["线型比例", "1", 1], ["线宽", "ByLayer", 1, "line"], ["透明度", "ByLayer", 1], ["厚度", "0", 1]]],
  ["三维效果", [["材质", "ByLayer", 1], ["阴影显示", "投射和接收阴影", 0]]],
  ["打印样式", [["打印样式", "ByColor", 0], ["打印样式表", "无", 1], ["打印表附着到", "模型", 0], ["打印表类型", "不可用", 0]]],
  ["视图", [["圆心 X 坐标", "224988", 0], ["圆心 Y 坐标", "201790", 0], ["圆心 Z 坐标", "0", 0], ["高度", "280240", 0], ["宽度", "573560", 0]]],
  ["其他", [["注释比例", "1:1", 1], ["打开 UCS 图标", "是", 1], ["在原点显示 UCS 图标", "是", 1], ["每个视口都显示 UCS", "是", 1], ["UCS 名称", "", 0], ["视觉样式", "二维线框", 1]]],
];
function Properties() {
  return (
    <Props>
      <GripTitle>特性</GripTitle>
      <PropsBody>
        <Row>
          <Select><select aria-label="选择对象"><option>无选择</option></select><svg width="10" height="6" viewBox="0 0 10 6"><path d="M1 1 5 5 9 1" fill="none" stroke="#555" /></svg></Select>
          {["selplus", "selpick", "selquick"].map((n) => <SelBtn key={n} aria-label={n}><Ic n={n} s={18} /></SelBtn>)}
        </Row>
        <Sections>
          {SECTIONS.map(([name, rows]) => (
            <section key={name}>
              <Head>{name}<Caret $up $w={4} $c="#000" /></Head>
              <Table><tbody>{rows.map(([k, v, w, m]) => (
                <tr key={k}><th scope="row">{k}</th><Val $w={!!w}><Cell>{m === "box" && <b />}{m === "line" && <i />}{v}</Cell></Val></tr>))}</tbody></Table>
            </section>
          ))}
        </Sections>
      </PropsBody>
    </Props>
  );
}

/* ---------- upper docks ---------- */
const Main = styled.div`flex: 1; display: flex; flex-direction: column; min-width: 0;`;
const DockRow = styled.div`display: flex; gap: 3px; height: 60px; padding-top: 1px; background: #d6d6d6;`;
const Dock = styled.div`display: flex; align-items: center; padding: 2px 4px; border: 2px solid #6b6b6b; border-top-color: #444; background: #dadada;`;
const Grip = styled.i`width: 5px; align-self: stretch; margin: 2px; background: radial-gradient(#888 1px, transparent 1px) 0 0 / 3px 3px;`;
const Stack = styled.div<{ $g?: number; $w?: number; $h?: number; $end?: boolean }>`
  display: flex; flex-direction: column; align-items: center; justify-content: ${(p) => (p.$end ? "flex-end" : "space-between")}; gap: ${(p) => p.$g ?? 2}px; height: ${(p) => p.$h ?? 52}px;
  width: ${(p) => (p.$w ? `${p.$w}px` : "auto")};
  button { display: flex; align-items: center; justify-content: center; }
`;
const Sunk = styled.button`width: 38px; height: 32px; border: 2px solid #bbb; background: #e4e4e4;`;
const Dark = styled.div`display: flex; align-items: center; justify-content: space-around; width: 40px; height: 18px; background: #808080; color: #fff;`;
const Views = styled.ul`
  width: 56px; height: 52px; margin: 0; padding: 0; list-style: none; background: #fff;
  li { display: flex; align-items: center; gap: 4px; height: 17px; padding-left: 5px; } li:first-child { background: #d8d8d8; }
`;
const Mini = styled.button`width: 15px; height: 17px; border: 1px solid #999; background: #ececec; svg { margin: auto; }`;
const Search = styled.label`display: flex; align-items: center; width: 90px; height: 18px; padding: 0 2px 0 4px; border: 2px solid #aaa; input { width: 68px; outline: 0; } input::placeholder { color: #999; opacity: 1; }`;
const Range = styled.input.attrs({ type: "range" })`
  width: 70px; height: 14px; appearance: none;
  &::-webkit-slider-runnable-track { height: 2px; background: #222; }
  &::-webkit-slider-thumb { appearance: none; width: 8px; height: 8px; margin-top: 2px; background: #777; clip-path: polygon(50% 0, 100% 100%, 0 100%); }
`;
const Chevron = ({ d }: { d: string }) => <svg width="10" height="8" viewBox="0 0 10 8"><path d={d} fill="none" stroke="#555" strokeWidth="2" /></svg>;
const Small = styled.span`align-self: flex-end; color: #777; font-size: 11px;`;
const ThinTitle = styled.div`width: 40px; height: 17px; background: #808080; color: #fff; text-align: center;`;

function UpperDocks() {
  return (
    <DockRow>
      <Dock>
        <Grip />
        <svg width="44" height="46" viewBox="0 0 44 46" fill="none" stroke="#f7f7f7" strokeWidth="5"><path d="M1 4H43M1 11H19V43M43 11H26V43H43M26 28H43" /><path d="M19 22H13A10 10 0 0 0 13 43H19M19 29H14A3 3 0 0 0 14 36H19" strokeWidth="3" /></svg>
        <Row $g={8} $p="0 0 0 6px"><Caret $w={5} $c="#999" /><Stack $w={12}><svg width="10" height="18"><rect x=".5" y=".5" width="9" height="16" rx="2" fill="#fff" stroke="#333" /><rect x="1" y="9" width="8" height="7" fill="#18b32a" /></svg><Small>«</Small></Stack></Row>
        <Stack $w={50}><Sunk aria-label="格式刷"><Ic n="bigbrush" s={26} /></Sunk><Dark><Ic n="undo" /><Ic n="redo" /></Dark></Stack>
        <Stack $w={24} $g={0}><Ic n="scissors" /><Ic n="copydoc" /><Ic n="paste" /></Stack>
        <Stack $w={60}><svg width="54" height="33" viewBox="0 0 54 33"><rect width="54" height="33" fill="#333" /><g fill="none" stroke="#aaa"><rect x="3.5" y="3.5" width="28" height="26" /><rect x="7.5" y="7.5" width="20" height="18" strokeDasharray="1 1" /><rect x="11.5" y="11.5" width="12" height="11" /><path d="M42.5 4V29" /><path d="M45.5 4V29" strokeDasharray="1 1" /></g></svg><Row $g={2}><Ic n="red" /><Ic n="red" /><Ic n="red" /></Row></Stack>
        <Stack $w={26} $g={0}><Ic n="zoomwin" /><Ic n="orbit" /><Ic n="hand" /></Stack>
        <Views><li><Ic n="cubeTop" />俯视</li><li><Ic n="cubeBot" />仰视</li><li><Ic n="cubeLeft" />左视</li></Views>
        <Stack $g={0}><Mini aria-label="上一项"><Chevron d="M1 6 5 2 9 6" /></Mini><Mini aria-label="下一项"><Chevron d="M1 2 5 6 9 2" /></Mini><Mini aria-label="更多"><Chevron d="M0 1H10M1 3 5 7 9 3" /></Mini></Stack>
        <Stack $w={28} $g={0}><Ic n="eye" /><Ic n="green" /><Ic n="eye" /></Stack>
      </Dock>
      <Dock>
        <Stack $w={12}><Small>×</Small><Small>«</Small></Stack>
        <Stack $w={44}><Sunk aria-label="图层工具"><Ic n="stack" s={26} /></Sunk><ThinTitle>图层</ThinTitle></Stack>
        <Grip />
        <Stack $w={236}>
          <Row $g={18} $p="0 0 0 6px">
            <Ic n="stackBox" s={27} /><Ic n="stackPen" s={27} /><Ic n="stackUp" s={27} />
            <Col><Search><input aria-label="图层搜索" placeholder="图层搜索" /><Ic n="search" s={14} /></Search><Row $g={4}><Range aria-label="透明度" defaultValue={56} />49</Row></Col>
          </Row>
          <Pick label="图层" value="0" h={18} pre={<><Ic n="bulb" /><Ic n="sun" /><Ic n="lock" /><Ic n="swatch" s={14} /></>} />
        </Stack>
      </Dock>
    </DockRow>
  );
}

const DocTabs = styled.nav`
  display: flex; align-items: center; gap: 3px; height: 22px; padding-left: 13px; font: 11px/16px ${MONO}; background: linear-gradient(#a0a0a0, #878787 12px, #fff 12px, #fff 16px, #000 16px, #000 17px, #fff 17px);
`;
const DocTab = styled.button<{ $on?: boolean }>`
  display: flex; justify-content: space-between; width: 142px; height: 16px; align-self: flex-start; padding: 0 6px 0 8px; border: 1px solid #666; border-top: 0; white-space: nowrap;
  color: #333; background: ${(p) => (p.$on ? "#ececec" : "#8f8f8f")};
`;
const Overflow = styled.span`display: flex; gap: 14px; margin-left: auto; align-self: flex-start; padding-top: 2px;`;

/* ---------- T20 side menu ---------- */
const Center = styled.div`flex: 1; display: flex; min-height: 0; background: #9f9f9f;`;
const Side = styled.aside`display: flex; flex-direction: column; width: 90px; border-right: 2px solid #8a8a8a; background: #9f9f9f;`;
const SideBody = styled.div`flex: 1; padding-top: 8px; background: #f0f0f0; border-radius: 4px 4px 0 0;`;
const Group = styled.div<{ $tint?: boolean }>`
  padding: 2px 0; ${(p) => p.$tint && css`padding: 1px 0; background: #f0f0ea; border-top: 2px solid #999; border-bottom: 1px solid #fff;`}
`;
const Sep = styled.hr`height: 2px; margin: 2px 0 1px 2px; border: 0; background: #9c9c9c;`;
const Entry = styled.button`display: flex; align-items: center; gap: 9px; width: 100%; height: 18px; padding-left: 2px; white-space: pre; text-align: left;`;
const M1 = ["设　　置", "轴网柱子", "墙　　体"];
const M2: [string, string][][] = [
  [["door", "新　 门"], ["win", "新　 窗"], ["olddoor", "旧 门 窗"], ["combo", "组合门窗"], ["band", "带 形 窗"], ["corner", "转 角 窗"], ["hole", "异 形 洞"]],
  [["numEdit", "编号设置"], ["num", "门窗编号"], ["check", "门窗检查"], ["tbl", "门 窗 表"], ["tbl2", "门窗总表"]],
  [["adj", "门窗归整"], ["fillw", "门窗填墙"], ["flipV", "内外翻转"], ["flipH", "左右翻转"], ["triG", "门窗工具"]],
];
const M3 = ["房间屋顶", "楼梯其他", "立　　面", "剖　　面", "文字表格", "尺寸标注", "符号标注", "图层控制", "工　　具", "三维建模", "图块图案", "文件布图", "其　　它", "帮助演示"];
const MenuItem = ({ n, t }: { n: string; t: string }) => <Entry><Ic n={n} />{t}</Entry>;
const Tog = styled.button`display: block; margin-left: 2px;`;
function SideMenu() {
  return (
    <Side>
      <GripTitle>T20...</GripTitle>
      <SideBody>
        <Tog aria-label="展开"><Ic n="expand" /></Tog>
        <Group>{M1.map((t) => <MenuItem key={t} n="tri" t={t} />)}<MenuItem n="triD" t="门　　窗" /></Group>
        <Group $tint>{M2.map((g, i) => <React.Fragment key={i}>{i > 0 && <Sep />}{g.map(([n, t]) => <MenuItem key={t} n={n} t={t} />)}</React.Fragment>)}</Group>
        <Group>{M3.map((t) => <MenuItem key={t} n="tri" t={t} />)}</Group>
      </SideBody>
    </Side>
  );
}

/* ---------- drawing ---------- */
function speckle(seed: number, density: number) {
  let s = seed, d = "";
  for (let y = 0; y < 48; y++) for (let x = 0; x < 48; x++) {
    s ^= s << 13; s ^= s >>> 17; s ^= s << 5;
    if ((s >>> 0) / 4294967296 < density) d += `M${x} ${y}h1v1h-1z`;
  }
  return d;
}
const NOISE: [string, string, string, string][] = [
  ["nGray", "#d0d0d0", "#505050", speckle(7771, 0.42)], ["nMint", "#7fffd4", "#000", speckle(3113, 0.42)], ["nBlue", "#0a6ad0", "#001c60", speckle(57577, 0.32)], ["nDark", "#000", "#2e2e2e", speckle(9191, 0.3)],
];
const lane = (t: number) =>
  `M${847 - 57 * t} ${350 - 20 * t}C${850 - 58 * t} ${250 - 40 * t} ${930 - 40 * t} ${185 - 65 * t} 1040 ${185 - 65 * t}C${1150 + 30 * t} ${185 - 65 * t} ${1235 + 40 * t} ${260 - 40 * t} ${1238 + 30 * t} 370L${1207 + 44 * t} 865C${1200 + 40 * t} ${970 + 30 * t} ${1120 + 20 * t} ${1035 + 65 * t} 1012 ${1035 + 65 * t}C${900 - 25 * t} ${1035 + 65 * t} ${822 - 60 * t} ${960 + 30 * t} ${817 - 65 * t} 850Z`;

const ROADS = [
  "M677 333 790 332 885 331 899 318 903 241", "M678 340 891 339Q900 338 901 330L907 241", "M919 241 914.6 328Q916 338 925 338L1325 336Q1345 335 1358 318L1364 241", "M928 241 923 318 935 331 1328 328 1349 308 1354 241",
  "M680 365.5 889 365Q899 367 899 383V925", "M681 373 885 373 896 382V925",
  "M912 375Q913 365 920 364L1337 362Q1354 366 1354 377L1327 800Q1324 812 1315 813L920 811Q912 808 912 798Z",
  "M912 925V835Q914 824 922 823L1313 828Q1325 832 1326 842L1321 925", "M920 925 921 838 934 827 1307 830 1316 840 1311 925",
  "M1394 241 1389 315Q1395 333 1408 335L1636 334", "M1404 241 1400 310 1409 328 1635 326",
  "M1639 359.5 1408 361Q1387 365 1385 383L1359 803Q1360 813 1370 814L1691 818", "M1640 366 1407 368 1395 387 1370 783 1378 805 1690 809",
  "M1353 925 1358 842Q1360 830 1368 827L1692 826", "M1362.7 925 1367 841 1376 833 1694 834",
  "M736 373V474L692 475", "M795 373V524L699 524", "M711 625 896 624", "M1625 241 1699 878",
];
const WHITE = "M395 112h24v12h-24zM612 127h30v11h-30zM700 130h26v10h-26zM738 130h24v10h-24zM775 125h26v9h-26zM835 74h26v7h-26zM872 74h22v7h-22zM960 78h38v8h-38zM110 270h24v9h-24zM145 272h24v9h-24zM180 270h30v9h-30zM350 270h28v9h-28zM385 272h24v9h-24zM85 294h22v11h-22zM506 322h25v10h-25zM484 349h24v10h-24zM484 376h24v10h-24zM85 430h22v10h-22zM85 444h22v10h-22zM256 438h25v10h-25zM302 435h26v10h-26zM345 422h25v10h-25zM466 460h24v10h-24zM632 416h24v10h-24zM775 205h30v10h-30zM828 441h45v11h-45zM826 496h44v11h-44zM822 540h44v11h-44zM818 585h44v10h-44zM555 667h24v10h-24zM488 698h24v9h-24zM210 748h26v10h-26zM292 748h26v10h-26zM408 828h24v10h-24zM297 838h24v10h-24zM332 862h28v10h-28zM545 940h50v10h-50zM122 974h24v12h-24zM250 972h52v11h-52zM318 972h26v11h-26zM396 980h24v10h-24zM440 980h24v10h-24zM424 994h24v10h-24zM166 1020h26v20h-26zM408 1145h24v10h-24zM360 1172h26v10h-26zM480 1196h24v9h-24zM568 1034h28v12h-28zM122 1252h26v22h-26zM170 1238h28v9h-28zM278 1234h26v9h-26zM130 1238h24v6h-24zM216 1294h28v11h-28zM224 1320h28v10h-28zM483 1338h20v26h-20zM788 1422h25v12h-25zM844 1424h24v11h-24zM828 1216h24v10h-24zM1168 1270h30v8h-30zM1174 1306h22v14h-22zM580 862h40v14h-40zM135 590h24v20h-24zM165 596h36v9h-36zM140 620h24v12h-24zM355 660h40v12h-40zM400 650h26v20h-26zM345 688h24v14h-24z";
const GREEN = "M180 160V132M215 160V132H240M418 118H450M605 130H615M772 146V130M835 120V78H850M868 130V80M950 110V86H962M772 178V212M410 318V388M345 400V430M460 430V460M632 370V420M766 446H830M766 499H828M730 544H824M725 589H820M555 650V672M209 730V750M293 730V750M544 922V946M571 922V946M435 830V842M160 984V1035H168M170 984V1020M420 972V996M124 640V600H140M367 590V635M395 640V660M330 704H345M785 1418V1425M845 1418V1425M822 1220H830M120 975V982M230 1300V1320";

function Block({ x, y, w, h }: { x: number; y: number; w: number; h: number }) {
  const n = Math.max(1, Math.round(w / 110));
  return (
    <g fill="none">
      <path d={`M${x - 10} ${y - 8}H${x + w + 6}V${y + h + 8}H${x - 10}Z`} stroke="#4a4a1c" strokeWidth="3" />
      <path d={`M${x - 18} ${y - 14}V${y + h + 15}`} stroke="#3a3a18" strokeWidth="2" />
      <rect x={x} y={y} width={w} height={h} stroke="#2a2a2a" strokeWidth="3" fill="#040404" />
      {Array.from({ length: n }, (_, i) => {
        const cw = w / n, cx = x + i * cw;
        return <g key={i} stroke="#2a2a2a"><rect x={cx + 30} y={y + 8} width={cw * 0.5} height={h - 16} strokeWidth="3" fill="url(#nDark)" fillOpacity="0.7" /><path d={`M${cx + 14} ${y}V${y + h}M${cx + 20} ${y + h * 0.6}H${cx}M${cx + cw * 0.88} ${y}V${y + h}M${cx + cw * 0.95} ${y}V${y + h}`} strokeWidth="3" /></g>;
      })}
      <path d={`M${x} ${y - 12}H${x + w}M${x} ${y + h + 11}H${x + w}`} stroke="#80802c" strokeWidth="4" strokeDasharray="30 6" />
    </g>
  );
}
function Court({ x, y, w, h, a }: { x: number; y: number; w: number; h: number; a: number }) {
  const my = y + h / 2;
  return (
    <g fill="none" stroke="#008000" transform={`rotate(${a} ${x + w / 2} ${my})`}>
      <rect x={x} y={y} width={w} height={h} strokeWidth="4" />
      <g strokeWidth="3" stroke="#004a20"><rect x={x + 14} y={y + 12} width={w - 28} height={h - 24} /><path d={`M${x + w / 2} ${y + 12}V${y + h - 12}`} /><circle cx={x + w / 2} cy={my} r="14" />
        <path d={`M${x + 14} ${my - 46}C${x + 85} ${my - 45} ${x + 85} ${my + 45} ${x + 14} ${my + 46}M${x + w - 14} ${my - 46}C${x + w - 85} ${my - 45} ${x + w - 85} ${my + 45} ${x + w - 14} ${my + 46}`} /><circle cx={x + 58} cy={my} r="13" /><circle cx={x + w - 58} cy={my} r="13" /></g>
    </g>
  );
}
const TREES = [[855, 112], [920, 115], [985, 112], [1105, 110], [1170, 115], [1235, 112], [1198, 150], [1272, 148], [1240, 187], [755, 960], [780, 1015], [822, 1060], [882, 1085]];
function SitePlan() {
  return (
    <g transform="translate(900 340) scale(.33333)">
      <path d="M65 122 95 93 1285 93 1330 170 1262 1330 1225 1392 105 1385 65 1345Z" fill="none" stroke="#800000" strokeWidth="3" />
      <path d="M600 103H105L76 132V1340L112 1379 1215 1385 1252 1330 1262 1090M1280 100 1322 172 1268 1085" fill="none" stroke="#6b3a2e" strokeWidth="6" />
      <path d="M450 108H165Q80 112 80 190V1260Q84 1330 140 1332H480" fill="none" stroke="#006a6a" strokeWidth="3" />
      <path d="M108 1200V220Q112 150 180 150H440M108 1240Q110 1290 150 1290H440Q480 1350 560 1375H750" fill="none" stroke="#006a6a" strokeWidth="3" strokeDasharray="8 4" />
      <path d="M440 118H190Q104 130 96 210V1180M150 140Q118 150 118 200V1180M690 70Q705 110 680 138M730 66V138M300 135H440" fill="none" stroke="#5c5c1c" strokeWidth="3" strokeDasharray="16 6" />
      <path d="M440 130H230Q96 130 92 230V1190M132 165V268M132 265H440M715 66V140M350 91H640M655 240V300M640 140H800M590 1355H745" fill="none" stroke="#800000" strokeWidth="3" />
      <path d="M604 70V104H660M811 66V100H760M600 110H812V146H600" fill="none" stroke="#064" strokeWidth="3" />

      <g fill="#5a5a5a">
        <path d="M108 283H440L505 320V400L440 440H380L370 400H325L305 432H210L108 455Z" /><path d="M110 570H435L497 680 442 726H110Z" /><path d="M110 840H430L497 955 440 978H110Z" />
        <path d="M110 1188 200 1180 300 1185 430 1168 520 1048H700V1078H562L470 1160 520 1296 440 1245H110Z" /><path d="M150 1248H444V1290H150ZM117 1332H483V1373H117Z" /><path d="M484 108H600V150H484Z" />
      </g>
      <path d="M112 312H490V322H112ZM112 352H370V360H112ZM112 372H490V380H112ZM112 640H480V646H112ZM112 876H470V890H112ZM112 905H470V912H112ZM112 940H490V946H112Z" fill="#3d3d3d" />
      <path d="M115 573H355L362 582H115ZM375 308H440L444 390H405ZM295 885H325L330 872H358V905H298ZM345 1190 400 1195 432 1170 430 1185 395 1212 360 1210Z" fill="#d19a6a" />
      <path d="M392 316H430L434 384H412ZM110 590H215L200 630 110 650ZM325 700 400 650 460 662 430 705ZM293 838H322V885H293ZM235 280H340L300 300ZM280 600H370V640H320Z" fill="#000" />
      <path d="M325 602H370V635L345 625ZM370 690 440 670 430 690Z" fill="#0b3a55" />
      <g fill="#fff">
        <path d="M150 290 165 287 185 315 212 325 245 290 335 287 328 305 315 325 290 322 270 307 240 312 215 343 165 325Z" />
        <path d="M150 357 190 357 212 375 195 392 155 397Z" /><path d="M148 662 190 630 250 620 310 630 333 665 300 712H200Z" /><path d="M112 714H440L465 688 475 692 440 726H112Z" />
        <path d="M175 858 235 875 243 905 232 938 160 942 150 930 160 885Z" /><path d="M375 880Q390 860 430 858L432 960Q400 965 380 955L375 940Z" /><path d="M168 148H400V168H168Z" /><path d="M524 1040H678V1048H524ZM445 1190 468 1216 440 1210Z" />
      </g>
      <path d="M175 292H235L212 318 192 308ZM255 294 300 290 318 310 300 318 275 302Z" fill="#000" />
      <path d="M140 452 205 418 235 432H315L325 400 370 398 392 440H430L495 404" fill="none" stroke="#fff" strokeWidth="9" />
      <path d="M160 362 188 362 200 376 165 390ZM235 640 262 635 302 662 235 685ZM172 880 200 875V905L172 915ZM412 885H424V935H412Z" fill="#333" />
      <path d="M174 152H214V164H174ZM220 152H260V164H220ZM265 152H305V164H265ZM310 152H350V164H310ZM355 152H395V164H355Z" fill="#000" />
      <path d="M240 655H268V672H245ZM165 895H190V920H165Z" fill="#fff" />

      <Block x={140} y={205} w={300} h={54} /><Block x={140} y={490} w={298} h={54} /><Block x={140} y={765} w={298} h={52} /><Block x={136} y={1018} w={308} h={56} /><Block x={140} y={1095} w={250} h={58} />
      <Block x={530} y={250} w={128} h={68} /><Block x={530} y={428} w={126} h={60} /><Block x={530} y={672} w={126} h={68} /><Block x={530} y={950} w={126} h={62} />
      <path d="M440 185 530 240M440 270 505 318M440 205 510 262V320M445 560 500 680 440 735M435 560 480 640M440 740 500 690M470 800 520 760M470 800 530 925M475 530 525 640M475 530 525 495M440 975 500 955 470 900M525 1020 440 1095H395V1160" fill="none" stroke="#6b6b2c" strokeWidth="4" />
      <path d="M440 210 505 250V310M445 480 480 530M440 850 500 960M520 650 430 750M540 745 450 850" fill="none" stroke="#333" strokeWidth="3" />

      <g fill="url(#nGray)">
        <path d="M450 105H484V150H600L835 132 885 160 805 270 780 335 775 395H590V340H690V240H530L450 185Z" /><path d="M520 507H715L705 600 690 650H530L478 530Z" /><path d="M520 762H700L715 850 700 922H535L480 800Z" /><path d="M680 1042H770L800 1090V1135L735 1140 680 1110Z" /><path d="M748 1340H928V1416H748Z" />
      </g>
      <path d="M485 195H840V209H490ZM690 286H788V297H690ZM690 323H780V334H690ZM672 363H774V375H672ZM487 538H708V549H487ZM533 603H693V614H533ZM485 798H708V809H485ZM530 864H706V876H530Z" fill="#cccc00" />
      <path d="M748 177H825L800 215H780ZM610 360H670V375H620ZM580 875 640 792 650 808 630 865ZM570 545 590 533 622 550 660 578 665 598 620 617Z" fill="#080808" />
      <path d="M568 545 592 531 622 548 665 577 667 600 620 617Z" fill="none" stroke="#fff" strokeWidth="9" /><path d="M640 808 683 830 685 852 632 868Z" fill="#fff" /><path d="M582 546H604V556H582ZM596 566H618V576H596ZM622 595H645V606H622Z" fill="#fff" /><circle cx="633" cy="573" r="12" fill="#2b1c10" />

      <path d="M697 395H752L750 500 740 600 725 680 740 760 745 860 735 950 765 1040H712L693 940 710 850 700 760 680 680 695 600 712 500Z" fill="url(#nBlue)" />
      <path d="M697 395H715V500H700Z" fill="#0020e0" opacity="0.8" />
      <path d="M812 98H1272L1312 170H1260L1250 230 1000 110 870 170 855 130 812 128ZM752 395H775L765 560 755 800 760 900 800 1030 880 1085 1195 1040 1197 1085 1260 1090 1252 1310 1220 1383H930V1350H1195L1198 1150 1180 1137H805L800 1090 765 1040 725 940 745 860 740 760 728 680 742 600 750 500Z" fill="url(#nMint)" />
      <ellipse cx="735" cy="670" rx="11" ry="36" fill="#1b0d0d" />
      {TREES.map(([x, y]) => <circle key={x} cx={x} cy={y} r="9" fill="#2a3322" />)}

      <path d="M1250 170 1316 172 1262 1088 1197 1083Z" fill="#000" stroke="#7a3a08" strokeWidth="4" />
      <path d={lane(1)} fill="#050505" stroke="#7a3a08" strokeWidth="4" />
      {[0.12, 0.24, 0.36, 0.48, 0.6, 0.72, 0.84].map((t) => <path key={t} d={lane(t)} fill="none" stroke="#464646" strokeWidth="3" />)}
      <path d={lane(0)} fill="#000" stroke="#803c06" strokeWidth="6" />
      {[0, 1, 2, 3, 4, 5, 6].map((i) => <path key={i} d={`M${1256 + i * 8} 175L${1203 + i * 8} 1083`} stroke="#555" strokeWidth="3" />)}
      <path d="M1250 285H1302V296H1250ZM1266 312H1280V320H1266ZM1232 573H1285V584H1232ZM1240 594H1270V602H1240ZM1205 1040H1256V1052H1205ZM776 532H826V543H776ZM782 558H816V567H782ZM779 575H812V584H779Z" fill="#8a8a8a" />
      <path d="M845 353 1237 378M818 842 1207 865" stroke="#803c06" strokeWidth="6" />
      <g fill="none" stroke="#333" strokeWidth="3"><path d="M877 360 847 840M1205 380 1173 862M862 598 1190 620" /><g stroke="#6d6d6d"><circle cx="1027" cy="610" r="45" /><path d="M943 362 940 442 1133 452 1139 376M998 366 996 391 1084 398 1086 372M916 850 919 766 1115 778 1109 856M967 850 970 821 1057 827V852" /></g></g>
      <Court x={926} y={214} w={240} h={144} a={3} /><Court x={888} y={860} w={240} h={142} a={3} />
      <rect x="1064" y="276" width="10" height="12" fill="#888" />

      <path d="M475 1160 562 1080H672L680 1122 728 1126 735 1148 805 1150V1327H560Z" fill="#030303" stroke="#80802c" strokeWidth="4" />
      <path d="M488 1160 566 1092H660V1135H725V1160H790V1315H568Z" fill="none" stroke="#333" strokeWidth="3" />
      <g fill="none" stroke="#333" strokeWidth="3">{[546, 564, 582, 600, 616].map((x) => <path key={x} d={`M${x} 1132h8v26h-8zM${x} 1170h8v34h-8zM${x} 1210h8v28h-8zM${x} 1262h8v24h-8z`} />)}
        <path d="M655 1190H740V1285H655ZM750 1175H788V1230H750ZM670 1250H735M700 1190V1320M690 1150 655 1200M670 1300H740V1322M760 1180H780V1222H760ZM520 1210 575 1290M535 1200 560 1240" /></g>
      <path d="M520 1206H737V1300" fill="none" stroke="#1a1a8c" strokeWidth="3" strokeDasharray="14 5" />
      <path d="M870 1165H1160V1318H870Z" fill="#030303" stroke="#333" strokeWidth="3" />
      <g fill="none" stroke="#3c3c3c" strokeWidth="3"><path d="M870 1180H930V1210H895V1290H930V1318M920 1165V1318M960 1180V1318M985 1185V1310M1030 1165V1320M1030 1200H1125M1030 1215H1125M870 1250H960" />{[1045, 1060, 1075, 1090, 1105, 1118].map((x) => <path key={x} d={`M${x} 1175V1320`} />)}</g>
      <path d="M560 1325H1165M806 1137V1325M862 1152H1195M1162 1150V1325" stroke="#800000" strokeWidth="3" fill="none" />
      <path d="M820 1145V1340M832 1145V1340M862 1145V1330M865 1330H1190M560 1335H750M930 1347H1190M1170 1150V1260" stroke="#80802c" strokeWidth="3" fill="none" />
      <path d="M848 1145V1340M1165 1278H1198V1304H1165Z" stroke="#066" fill="#555" strokeWidth="2" />
      <path d={GREEN} fill="none" stroke="#00e800" strokeWidth="3" />
      <path d={WHITE} fill="#fff" />
      <path d="M1314 1110H1324V1118H1334V1124H1324V1132H1340V1144H1314ZM1328 1110H1342V1116H1328ZM1347 1116H1355V1142H1347ZM1362 1118H1378V1126H1362ZM1362 1132H1374V1144H1362Z" fill="#fff" />
      <g fill="#ff2312" shapeRendering="auto"><path d="M1268 135 1270 76 1285 88 1398 -72 1312 104 1326 120Z" /><path d="M1256 898 1258 946 1272 936 1468 1320 1288 925 1302 915Z" /><path d="M1215 1246 1222 1294 1236 1283 1404 1494 1250 1268 1262 1260Z" /></g>
    </g>
  );
}
const Canvas = styled.svg`flex: 1; min-width: 0; min-height: 0; height: 100%; background: #000;`;
function Drawing() {
  return (
    <Canvas viewBox="442 241 1450 684" preserveAspectRatio="xMinYMin slice" shapeRendering="crispEdges" role="img" aria-label="平面布置图">
      <defs>{NOISE.map(([id, bg, fg, d]) => <pattern key={id} id={id} width="144" height="144" patternUnits="userSpaceOnUse"><rect width="144" height="144" fill={bg} /><path d={d} fill={fg} transform="scale(3)" /></pattern>)}</defs>
      <g fill="none" stroke="#008080"><path d="M824 241 636 263 716 926M1702 241 1775 885 1440 925" /><path d="M943 241 669 272 744 926M1689 241 1762 873 1326 925M1762 878 1690 888" strokeWidth="2" /></g>
      <g fill="none" stroke="#00805a">{ROADS.map((d) => <path key={d} d={d} />)}</g>
      <SitePlan />
      <path d="M1323 546.5H1420M1371.5 498V595M1368.500 543.500H1374.500V549.500H1368.500Z" stroke="#fff" fill="none" />
      <g stroke="#fff" fill="none"><path d="M461.500 880V926M463 864 469.500 870 476 864M469.500 870V876M516 917 529 926M529 917 516 926" /></g>
      <g shapeRendering="auto"><circle cx="1808" cy="347" r="55" fill="none" stroke="#2b2b2b" strokeWidth="11" /><rect x="1782" y="321" width="52" height="52" fill="#a0a0a0" /><rect x="1784" y="434" width="40" height="17" rx="3" fill="#8b8b92" /></g>
      <g fill="#9a9a9a" fontSize="19" fontFamily={UI}><text x="1742" y="355">西</text><text x="1854" y="355">东</text></g>
      <text x="446" y="259" fill="#fff" fontSize="12" fontFamily={UI}>[−][俯视][二维线框]</text>
      <path d="M1852 252H1858V258M1850.500 254.500H1857V260.500H1850.500ZM1870 252 1878 260M1878 252 1870 260" stroke="#fff" strokeWidth="2" fill="none" />
    </Canvas>
  );
}
const View = styled.div`flex: 1; display: flex; flex-direction: column; min-width: 0;`;
const CanvasRow = styled.div`flex: 1; display: flex; min-height: 0; border-top: 1px solid #777;`;
const VScroll = styled.div`display: flex; flex-direction: column; align-items: center; width: 18px; padding: 6px 0 110px; background: #f0f0f0; justify-content: space-between; i { width: 14px; height: 17px; background: #cdcdcd; }`;
const StatusBar = styled.div`display: flex; justify-content: flex-end; height: 25px; padding: 3px 172px 3px 0; background: linear-gradient(#989898, #7d7d7d); border-bottom: 1px solid #ddd;`;
const ScaleBox = styled.button`display: flex; align-items: center; gap: 3px; width: 34px; padding-left: 1px; background: #d0d0d0; border: 1px solid #555; font: 11px/14px ${MONO};`;

/* ---------- bottom docks ---------- */
const Bottom = styled.footer`display: flex; flex: none; gap: 5px; height: 82px; background: #808080;`;
const Box = styled.div<{ $w: number }>`width: ${(p) => p.$w}px; border: 1px solid #f0f0f0; background: #d8d8d8; outline: 1px solid #555;`;
const Sheets = styled.div`display: flex; height: 15px; margin-top: 1px; border-bottom: 1px solid #444; background: #eee; align-items: center; white-space: nowrap;`;
const Nav = styled.button`width: 15px; height: 13px; border-right: 1px solid #aaa; svg { margin: auto; }`;
const Sheet = styled.button<{ $on?: boolean }>`
  height: 14px; padding: 0 4px; line-height: 14px; ${(p) => p.$on && css`background: #000; color: #fff; font-weight: 700; clip-path: polygon(0 0, 100% 0, 88% 100%, 14% 100%); padding: 0 8px;`}
`;
const HScroll = styled.div`display: flex; flex: 1; justify-content: space-between; align-items: center; padding: 0 14px 0 8px; background: #f0f0f0; border-left: 4px solid #ccc; height: 14px; i { width: 13px; height: 14px; background: #cdcdcd; }`;
const Raised = styled.button<{ $w?: number; $h?: number; $corner?: boolean }>`
  display: flex; align-items: center; justify-content: center; width: ${(p) => p.$w ?? 42}px; height: ${(p) => p.$h ?? 42}px; border: 1px solid #999; box-shadow: inset 1px 1px #fff; background: #dcdcdc;
  font: 12px/20px "Liberation Serif", serif; white-space: pre; ${(p) => p.$corner && css`align-self: flex-end; margin-left: auto;`}
`;
const Coord = styled.output`display: block; height: 14px; margin: 2px 3px 0 2px; padding-left: 3px; background: #333; color: #fff; font: 10px/14px "Liberation Sans", sans-serif;`;
const Field = styled.label`display: flex; align-items: center; gap: 4px; width: 98px; white-space: nowrap;`;
const Drop = styled.span`display: flex; align-items: center; width: 63px; height: 19px; padding: 0 3px; border: 2px solid #bbb; background: #fff; font: 11px/14px ${MONO}; select { flex: 1; min-width: 0; appearance: none; outline: 0; }`;
const FourGrid = styled.div`display: grid; grid-template-columns: repeat(2, 20px); gap: 1px; place-items: center; background: #bbb; font: 11px/19px "Liberation Serif", serif; > * { display: grid; place-items: center; width: 20px; height: 20px; background: #f0f0f0; }`;
const Elev = styled.div`display: grid; grid-template: 36px 20px 20px / 58px 28px; gap: 1px; padding-left: 13px; place-items: stretch; height: 78px;`;
const ElevCell = styled.div<{ $bg: string }>`display: flex; align-items: center; justify-content: center; background: ${(p) => p.$bg}; color: #fff; input { width: 100%; padding-left: 4px; color: #000; font: 12px/16px ${MONO}; }`;
const Keypad = styled.div`display: flex; flex-direction: column; gap: 5px; width: 66px; padding: 6px 4px; border: 2px solid #eee; border-radius: 5px; background: linear-gradient(90deg, #444, #aaa);`;
const Screen = styled.div`height: 25px; background: #000; border: 1px solid #888;`;
const Keys = styled.div`display: grid; grid-template-columns: repeat(3, 16px); gap: 3px 3px; button { height: 10px; border-radius: 2px; background: #bbb; display: flex; align-items: center; justify-content: center; }`;
const Pad = styled.div`display: grid; grid-template-columns: repeat(5, 23px); grid-auto-rows: 23px; gap: 3px; padding: 2px 0 0 1px; align-content: start; button { display: flex; align-items: center; justify-content: center; background: #dedede; border: 1px solid #eee; font: 9px/9px "Liberation Serif", serif; }`;
const Cmd = styled.div`flex: 1; display: flex; flex-direction: column; min-width: 0; margin: 3px 0 2px; border: 1px solid #555; background: #c8c8c8; font: 13px/15px ${MONO}; p { margin: 0; padding-left: 2px; }`;
const CmdLine = styled.label`display: flex; height: 19px; margin-top: auto; padding-left: 2px; background: #fff; border-top: 1px solid #888; align-items: center; input { flex: 1; outline: 0; }`;
const Tray = styled.div`display: flex; width: 172px; background: #d6d6d6;`;
const TrayCol = styled.div`display: flex; flex-direction: column; align-items: center; justify-content: space-between; width: 28px; padding: 8px 0 2px; background: #bdbdbd;`;
const Toggles = styled.div`padding-top: 1px;`;
const Toggle = styled.button`display: flex; align-items: center; gap: 12px; height: 17px; padding-left: 7px; width: 64px; border-bottom: 1px solid #888;`;
const Snap = styled.div`display: grid; grid-template-columns: repeat(3, 13px); gap: 1px; padding: 1px 0 0 1px; > svg { background: #fff; }`;

function BottomDocks() {
  const nav = ["M2 1V9M8 1 4 5 8 9Z", "M7 1 3 5 7 9Z", "M3 1 7 5 3 9Z", "M8 1V9M2 1 6 5 2 9Z"];
  return (
    <Bottom>
      <Box $w={326}>
        <Sheets>
          {nav.map((d, i) => <Nav key={d} aria-label={`布局 ${i}`}><svg width="10" height="10" viewBox="0 0 10 10"><path d={d} fill="#444" stroke="#444" /></svg></Nav>)}
          <Sheet $on>模型</Sheet><Sheet>布局1 /</Sheet><Sheet>布局2 /</Sheet>
          <HScroll><Chevron d="M7 0 3 4 7 8" /><span /><i /><Chevron d="M3 0 7 4 3 8" /></HScroll>
        </Sheets>
        <Row $g={5} $p="3px 3px 0">
          <Col><Field>比例<Drop><select aria-label="比例"><option>1:150</option></select><Caret $w={4} $c="#666" /></Drop></Field><Field>单位<Drop><select aria-label="单位"><option>mm</option></select><Caret $w={4} $c="#666" /></Drop></Field></Col>
          <Raised aria-label="世界"><Ic n="globe" s={32} /></Raised><Raised aria-label="图形"><Ic n="plan" s={32} /></Raised><Grip />
          <Raised>{"X =\nY ="}</Raised>
          <FourGrid><button aria-label="坐标"><Ic n="globeBlue" s={18} /></button><button>XY</button><button aria-label="平面"><Ic n="plan" s={18} /></button><button>AB</button></FourGrid>
          <Stack $g={0} $h={42}><Ic n="stackBox" /><Ic n="gear" /></Stack>
        </Row>
        <Coord>305991, 220988, 0</Coord>
      </Box>
      <Box $w={106}>
        <Elev>
          <ElevCell $bg="#777"><svg width="38" height="34" viewBox="0 0 38 34"><rect width="38" height="34" rx="3" fill="#f0f0f0" /><circle cx="10" cy="7" r="3" fill="#111" /><path d="M5 32V14L10 11 19 10 20 12 13 15 11 22 12 32H10L8 24 7 32ZM18 8H34V11H18ZM20 12H22V32H20ZM29 12H31V32H29ZM20 30H31V32H20Z" fill="#111" /></svg></ElevCell>
          <ElevCell $bg="#999"><svg width="22" height="32" viewBox="0 0 22 32" stroke="#555" fill="none"><path d="M2 1V28M2 2H14M2 7H14M2 12H14M2 17H14M2 22H12M5 2 8 6 11 2M5 7 8 11 11 7M5 12 8 16 11 12M5 17 8 21 11 17" /><circle cx="16" cy="27" r="4.500" fill="#555" /><path d="M13.500 27H18.500" stroke="#fff" strokeWidth="2" /></svg></ElevCell>
          <ElevCell $bg="#fff"><input aria-label="标高值" defaultValue="0.00" /></ElevCell>
          <ElevCell $bg="#d5d5d5"><svg width="12" height="14" viewBox="0 0 12 14"><path d="M2 1H10M4 1V7M8 1V7M1 7H11M6 7V13" stroke="#555" strokeWidth="1.5" /></svg></ElevCell>
          <ElevCell $bg="#5c5e62">标高</ElevCell>
          <ElevCell $bg="#999"><svg width="16" height="16" viewBox="0 0 16 16"><circle cx="8" cy="4" r="3.2" fill="#444" /><path d="M2 15V10L5 8H11L14 10V15Z" fill="#444" /></svg></ElevCell>
        </Elev>
      </Box>
      <Keypad>
        <Screen><svg width="54" height="22" viewBox="0 0 54 22"><path d="M14 9H40M16 9 21 16 26 9" fill="none" stroke="#fff" /></svg></Screen>
        <Keys>{Array.from({ length: 9 }, (_, i) => <button key={i} aria-label={`标高样式 ${i + 1}`}>{i % 3 === 2 ? <Ic n={i === 8 ? "gear" : "stack"} s={10} /> : <Caret $w={4} $c={i % 2 ? "#222" : "#555"} />}</button>)}</Keys>
      </Keypad>
      <Pad>{["s0", "s1", "s2", "s3", "", "s5", "s6", "s7", "s8", "s9", "cloud", "s11", "s12", "s13", "T"].map((n, i) =>
        n === "" ? <button key={i}>3.00 ±0.00</button> : n === "T" ? <button key={i}>T 1:10</button> : <button key={i} aria-label={`符号 ${i + 1}`}><Ic n={n} s={17} /></button>)}</Pad>
      <Stack $w={18} $h={76} $g={8} $end><Ic n="stackBox" /><Ic n="gearLight" s={14} /></Stack>
      <Cmd><p>命令:</p><p>命令: *取消*</p><CmdLine>命令:<input aria-label="命令" /></CmdLine></Cmd>
      <Tray>
        <TrayCol><svg width="16" height="16" viewBox="0 0 16 16"><rect width="16" height="16" rx="2" fill="#f4f4f4" stroke="#666" /><path d="M5 7 8 3 11 7ZM5 13 8 9 11 13Z" fill="#333" /></svg><Ic n="wiper" s={22} /><Ic n="gear" s={14} /></TrayCol>
        <Toggles>
          <Toggle>正交<Ic n="red" s={14} /></Toggle><Toggle>捕捉<Ic n="green" s={14} /></Toggle>
          <Row $g={8}><Snap>{["sq1", "n1", "n2", "n3", "n4", "n5", "n6", "blockNew", "n7"].map((n) => <Ic key={n} n={n} s={13} />)}</Snap><Ic n="gear" s={13} /></Row>
        </Toggles>
        <Raised $w={28} $h={32} $corner aria-label="工具箱"><Ic n="bag" s={24} /></Raised>
      </Tray>
    </Bottom>
  );
}

/* ---------- floating tool windows ---------- */
const Float = styled.aside`
  position: absolute; z-index: 4; top: 133px; right: 60px; width: 57px; border: 1px solid #333; background: #d8d8d8;
`;
const FloatBar = styled.div`
  display: flex; justify-content: flex-end; align-items: center; height: 13px; padding-right: 3px; color: #ddd; font-size: 12px; line-height: 12px;
  background: radial-gradient(#111 1px, transparent 1px) 0 0 / 3px 3px, #4c4c4c; button { background: #4c4c4c; padding: 0 2px; }
`;
const FloatGroup = styled.div<{ $h: number }>`
  display: grid; grid-template-columns: 24px 24px; grid-auto-rows: 21px; justify-content: center; justify-items: center; align-items: center; column-gap: 2px; align-content: end;
  height: ${(p) => p.$h}px; padding-bottom: 2px; border-bottom: 2px solid #555;
  background: repeating-linear-gradient(90deg, #999 0 1px, transparent 1px 3px) 3px 4px / 50px 3px no-repeat, linear-gradient(#fff, #fff) 3px 14px / 50px 1px no-repeat;
`;
const HatchPair = styled.div`display: flex; align-items: center; justify-content: space-around; height: 27px; padding: 0 2px; border-top: 1px solid #fff; border-bottom: 2px solid #555;`;
const Swatches = styled.svg`margin: 0 auto;`;
const NavBar = styled.aside`
  position: absolute; z-index: 3; top: 474px; right: 23px; width: 32px; height: 212px; border-radius: 4px; background: #464646; display: flex; flex-direction: column; align-items: center; justify-content: space-around; padding: 14px 0;
`;
const Sogou = styled.aside`
  position: absolute; z-index: 5; right: 0; top: 928px; display: flex; align-items: center; justify-content: space-around; width: 150px; height: 26px; padding-left: 4px; background: #fff; border: 1px solid #a9c8e8; color: #0a6fd8; font-size: 15px; font-weight: 700;
`;
const SogouLogo = styled.svg`position: absolute; left: -28px; top: -6px;`;
const EDIT = ["copies", "eraseG", "copy", "move", "array", "offset", "mirror", "rotate", "trim", "extend", "fillet", "chamfer", "scale", "stretch", "brk", "brk2", "alignT", "alignL", "list", "slashes", "join", "boxes"];
const DRAW = ["battlement", "line", "xline", "pline", "polygon", "rect", "arc", "circle", "spline", "cloud", "ellarc", "ellipse", "blockNew", "block", "region", "point", "mtext", "ttool", "letterA", "table"];
const GrayTool = styled.button`filter: grayscale(1);`;

function FloatPalette() {
  return (
    <Float>
      <FloatBar><button aria-label="关闭">×</button></FloatBar>
      <FloatGroup $h={253}>{EDIT.map((n) => <GrayTool key={n} aria-label={n}><Ic n={n} s={17} /></GrayTool>)}</FloatGroup>
      <Swatches width="53" height="63" viewBox="0 0 53 63">
        <path d="M3 3.500H50" stroke="#999" strokeWidth="3" strokeDasharray="1 2" />
        <rect x="25" y="32" width="25" height="25" fill="#fff" /><path d="M30 53H46V34" stroke="#999" strokeWidth="5" strokeDasharray="2 1" fill="none" />
        <rect x="15" y="22" width="24" height="24" fill="#4b719c" stroke="#fff" /><rect x="2" y="10" width="26" height="26" fill="#b9b9b9" stroke="#fff" strokeWidth="2" />
        <path d="M3 16H27M3 23H27M3 29H27M14 11V16M8 16V23M20 16V23M14 23V29M8 29V35M20 29V35" stroke="#999" /><path d="M41 14Q47 13 47 20" stroke="#111" fill="none" strokeWidth="1.500" /><path d="M39 14 43 11V17ZM47 22 44 18H50Z" fill="#111" />
        <circle cx="9" cy="56" r="6" fill="#eee" /><circle cx="9" cy="56" r="4.500" fill="#109a4c" /><path d="M9 53 12 56H10V59H8V56H6Z" fill="#fff" />
      </Swatches>
      <HatchPair><Ic n="hatch1" s={17} /><Ic n="hatch2" s={17} /></HatchPair>
      <FloatGroup $h={232}>{DRAW.map((n) => <GrayTool key={n} aria-label={n}><Ic n={n} s={17} /></GrayTool>)}</FloatGroup>
    </Float>
  );
}
const S = ({ s }: { s: number }) => (
  <svg width={s} height={s} viewBox="0 0 32 32"><path d="M3 4 27 1 30 26 7 31Z" fill="#f4511e" /><path d="M23 8Q10 5 10 11T22 17 20 24 9 23" fill="none" stroke="#fff" strokeWidth="4" /></svg>
);

/* ---------- taskbar ---------- */
const Taskbar = styled.footer`display: flex; flex: none; align-items: center; height: 40px; padding: 0 13px 0 14px; background: linear-gradient(90deg, #cfe2e8, #d7e5ec 50%, #dde3e2 75%, #cfe3e9);`;
const Running = styled.div`display: flex; gap: 9px; margin-left: -11px;`;
const TaskButton = styled.button`display: flex; align-items: center; justify-content: center; width: 40px; height: 40px; padding-top: 3px; border-bottom: 3px solid #e81123;`;
const Start = styled.button`width: 20px; margin-right: 30px;`;
const TrayRow = styled.div`display: flex; align-items: center; gap: 9px; margin-left: auto; font-size: 14px;`;
const Lang = styled.span`color: #777;`;
const Clock = styled.time`margin: 0 1px 0 8px; text-align: center; font-size: 12px; line-height: 19px; white-space: pre;`;

function TaskIcons() {
  const icons = [
    <g key="a"><rect x="3" y="0" width="18" height="24" fill="#5b6b78" /><rect x="5" y="2" width="14" height="5" fill="#4cc2ff" /><path d="M5 9h4v4H5zM10 9h4v4h-4zM15 9h4v4h-4zM5 14h4v4H5zM10 14h4v4h-4zM5 19h4v4H5zM10 19h4v4h-4z" fill="#d7dfe5" /><path d="M15 14h4v9h-4z" fill="#0a4a8a" /></g>,
    <g key="b"><path d="M1 3H9L11 5H22V20H1Z" fill="#e5a51f" /><path d="M1 7H23V20H1Z" fill="#ffd35c" /><path d="M6 21V13H18V21H14V17H10V21Z" fill="#3f9fe0" /></g>,
    <g key="c"><rect x="0.5" y="0.5" width="23" height="23" rx="2" fill="#1468b8" stroke="#556" /><path d="M8 8H4V16H8M9 16 12 7 15 16M10 13H14M16 8V16H18Q21 15 21 12T18 8Z" stroke="#fff" strokeWidth="1.3" fill="none" /></g>,
    <path key="d" d="M0 2H6L9 13 11 7 9 2H24L15 21H11L10 17 8 21H5Z" fill="#f0341c" />,
    <g key="e"><rect width="24" height="24" rx="4" fill="#d2ebfb" /><path d="M4 6Q10 4 20 6V10H14V20H10V10H4Z" fill="#0a93ee" /></g>,
    <rect key="f" width="24" height="24" rx="4" fill="#3f93f8" />,
    <g key="g"><circle cx="12" cy="12" r="12" fill="#0f74c4" /><path d="M2 8A12 12 0 0 1 24 11Q23 17 15 15 17 8 11 8 5 7 2 8Z" fill="#3ccf8e" /><path d="M8 13Q9 20 17 20 12 24 7 20 4 15 11 11Q8 11 8 13Z" fill="#0c4fa0" /><path d="M12 11Q9 13 11 16 14 18 19 17 15 14 15 13 15 10 12 11Z" fill="#d7edf8" /></g>,
    <g key="h"><path d="M0 0H24V24H0Z" fill="#d94a48" /><path d="M12 3 18 18 12 15 6 18Z" fill="#4a0606" /><path d="M12 3V12L6 18Z" fill="#9c0e0e" /></g>,
  ];
  const names = ["计算器", "文件夹", "CAD", "WPS", "T", "预", "Edge", "AutoCAD"];
  return <Running>{icons.map((ic, i) => <TaskButton key={i} aria-label={names[i]}><svg width="24" height="24" viewBox="0 0 24 24">{ic}{i === 5 && <text x="3" y="18" fontSize="18" fontWeight="700" fill="#fff" fontFamily={UI}>预</text>}</svg></TaskButton>)}</Running>;
}

export default function App() {
  return (
    <Desktop>
      <Global />
      <Accent />
      <Frame>
        <TitleBar><Title>{"T20天正建筑软件 V1.0 For Autodesk AutoCAD 2014         ZY19-65-24运动场区平面布置图.dwg"}</Title></TitleBar>
        <Caption>
          <button aria-label="最小化"><svg width="12" height="12"><path d="M1 6.500H11" stroke="#888" /></svg></button>
          <button aria-label="最大化"><svg width="12" height="12"><rect x="1.500" y="1.500" width="9" height="9" fill="none" stroke="#888" /></svg></button>
          <button aria-label="关闭"><svg width="12" height="12"><path d="M1 1 11 11M11 1 1 11" stroke="#888" /></svg></button>
        </Caption>
        <AppButton aria-label="应用程序">
          <svg width="26" height="30" viewBox="0 0 26 30"><path d="M12 0 2 26 9 22 11 10 22 25Z" fill="#a8140e" /><path d="M12 0 24 26 16 22Z" fill="#d9352a" /><rect x="8.500" y="7.500" width="12" height="16" rx="2" fill="#f2f2f2" stroke="#777" /><text x="11.500" y="20" fontSize="11" fill="#222" fontFamily={UI}>F</text></svg>
          <Caret />
        </AppButton>
        <TabRow>
          {TABS.map(([t, k], i) => <Tab key={t} $on={i === 0}>{t}<Tip>{k}</Tip></Tab>)}
          <Tab $tight={false} aria-label="最小化功能区"><svg width="14" height="10"><rect x=".5" y=".5" width="13" height="9" rx="2" fill="#eee" /><path d="M4 7 7 3 10 7Z" fill="#444" /></svg><Tip>X2</Tip></Tab>
          <Tab $tight aria-label="更多"><Caret $c="#ddd" /><Tip $end>X3</Tip></Tab>
        </TabRow>
        <RibbonBar />
        <Work>
          <Properties />
          <Main>
            <UpperDocks />
            <DocTabs>
              <DocTab>ZY19-65-09总平面...<span>×</span></DocTab><DocTab>ZY19-65-06总平面...<span>×</span></DocTab><DocTab $on>ZY19-65-24运动场...<span>×</span></DocTab>
              <Overflow><svg width="12" height="8" viewBox="0 0 12 8"><path d="M1 0 5 4 1 8M7 0 11 4 7 8" fill="none" stroke="#222" strokeWidth="1.500" /></svg><Caret $up $w={4} /></Overflow>
            </DocTabs>
            <Center>
              <SideMenu />
              <View>
                <CanvasRow><Drawing /><VScroll><Chevron d="M1 6 5 2 9 6" /><i /></VScroll></CanvasRow>
                <StatusBar><ScaleBox><svg width="12" height="14" viewBox="0 0 12 14"><path d="M6 1 1 13 6 10 11 13Z" fill="none" stroke="#333" /></svg>1:1</ScaleBox></StatusBar>
              </View>
            </Center>
            <BottomDocks />
          </Main>
        </Work>
        <FloatPalette />
        <NavBar>
          <svg width="26" height="180" viewBox="0 0 26 180" fill="none" stroke="#2c2c2c" strokeWidth="1.500">
            <circle cx="13" cy="13" r="10" /><circle cx="13" cy="13" r="6" /><path d="M10 31H16L13 34ZM0 39.500H26M8 66 2 56Q1 52 4 54L8 58 6 47Q8 44 10 48L12 54 12 44Q14 41 16 44L16 54 19 47Q21 45 22 48L21 56 24 52Q26 53 25 56L20 66ZM1 74 15 88M15 74 1 88" /><circle cx="18" cy="90" r="5" /><path d="M22 94 26 98M10 102H16L13 105ZM13 132V112M9 116 13 111 17 116" /><ellipse cx="13" cy="124" rx="11" ry="5" /><path d="M10 138H16L13 141ZM0 146.500H26M1 152H7V158H1ZM10 152H16V158H10ZM19 152H25V158H19ZM1 162H18V176H1ZM6 165V173L13 169Z" />
          </svg>
        </NavBar>
      </Frame>
      <Sogou>
        <SogouLogo width="32" height="32" viewBox="0 0 32 32"><path d="M3 4 27 1 30 26 7 31Z" fill="#f4511e" /><path d="M23 8Q10 5 10 11T22 17 20 24 9 23" fill="none" stroke="#fff" strokeWidth="4" /></SogouLogo>
        <span>英</span><span>•,</span>
        <svg width="12" height="16" viewBox="0 0 12 16"><rect x="3.500" y="0" width="5" height="9" rx="2.500" fill="#0a6fd8" /><path d="M1 6Q1 11 6 11T11 6M6 11V15" fill="none" stroke="#0a6fd8" strokeWidth="1.500" /></svg>
        <svg width="16" height="12" viewBox="0 0 16 12"><rect x="1" y="1" width="14" height="10" rx="1" fill="none" stroke="#0a6fd8" strokeWidth="1.500" /><path d="M3 4H13M3 6.500H13M5 9H11" stroke="#0a6fd8" strokeDasharray="2 1" /></svg>
        <svg width="16" height="14" viewBox="0 0 16 14"><path d="M0 3 5 0Q8 3 11 0L16 3 14 7 12 6V14H4V6L2 7Z" fill="#0a6fd8" /></svg>
        <svg width="14" height="14" viewBox="0 0 14 14"><path d="M1 1H6V6H1ZM8 1H13V6H8ZM1 8H6V13H1ZM8 8H13V13H8Z" fill="#0a6fd8" /></svg>
      </Sogou>
      <Taskbar>
        <Start aria-label="开始"><svg width="18" height="18" viewBox="0 0 18 18"><path d="M1 3 8 2V8.500H1ZM9 2 17 1V8.500H9ZM1 9.500H8V16L1 15ZM9 9.500H17V17L9 16Z" fill="#111" /></svg></Start>
        <Start aria-label="搜索"><svg width="18" height="18" viewBox="0 0 18 18"><circle cx="11" cy="7" r="5.500" fill="none" stroke="#111" strokeWidth="1.500" /><path d="M7 11 1 17" stroke="#111" strokeWidth="1.500" /></svg></Start>
        <TaskIcons />
        <TrayRow>
          <Chevron d="M1 7 5 2 9 7" />
          <svg width="16" height="16" viewBox="0 0 16 16" fill="none" stroke="#111"><path d="M4 3.500H15V11H4ZM9.500 11V14M6 14.500H13M1 1H5V5H1Z" /></svg>
          <svg width="18" height="16" viewBox="0 0 18 16" fill="none" stroke="#111"><path d="M1 5.500H4L8 2V13L4 9.500H1Z" /><circle cx="13" cy="11" r="5" fill="#d9262c" stroke="none" /><path d="M11 9 15 13M15 9 11 13" stroke="#fff" /></svg>
          <Lang>英</Lang><S s={18} />
          <Clock>{"11:36\n2023/1/28"}</Clock>
          <svg width="30" height="30" viewBox="0 0 30 30"><path d="M3 4H19V16H9L7 20V16H3Z" fill="#111" /><path d="M6 7.500H16M6 10.500H16" stroke="#fff" /><circle cx="19" cy="19" r="8" fill="#d4d4d4" stroke="#666" /><text x="16" y="23" fontSize="11" fontWeight="700" fill="#111" fontFamily={UI}>2</text></svg>
        </TrayRow>
      </Taskbar>
    </Desktop>
  );
}
